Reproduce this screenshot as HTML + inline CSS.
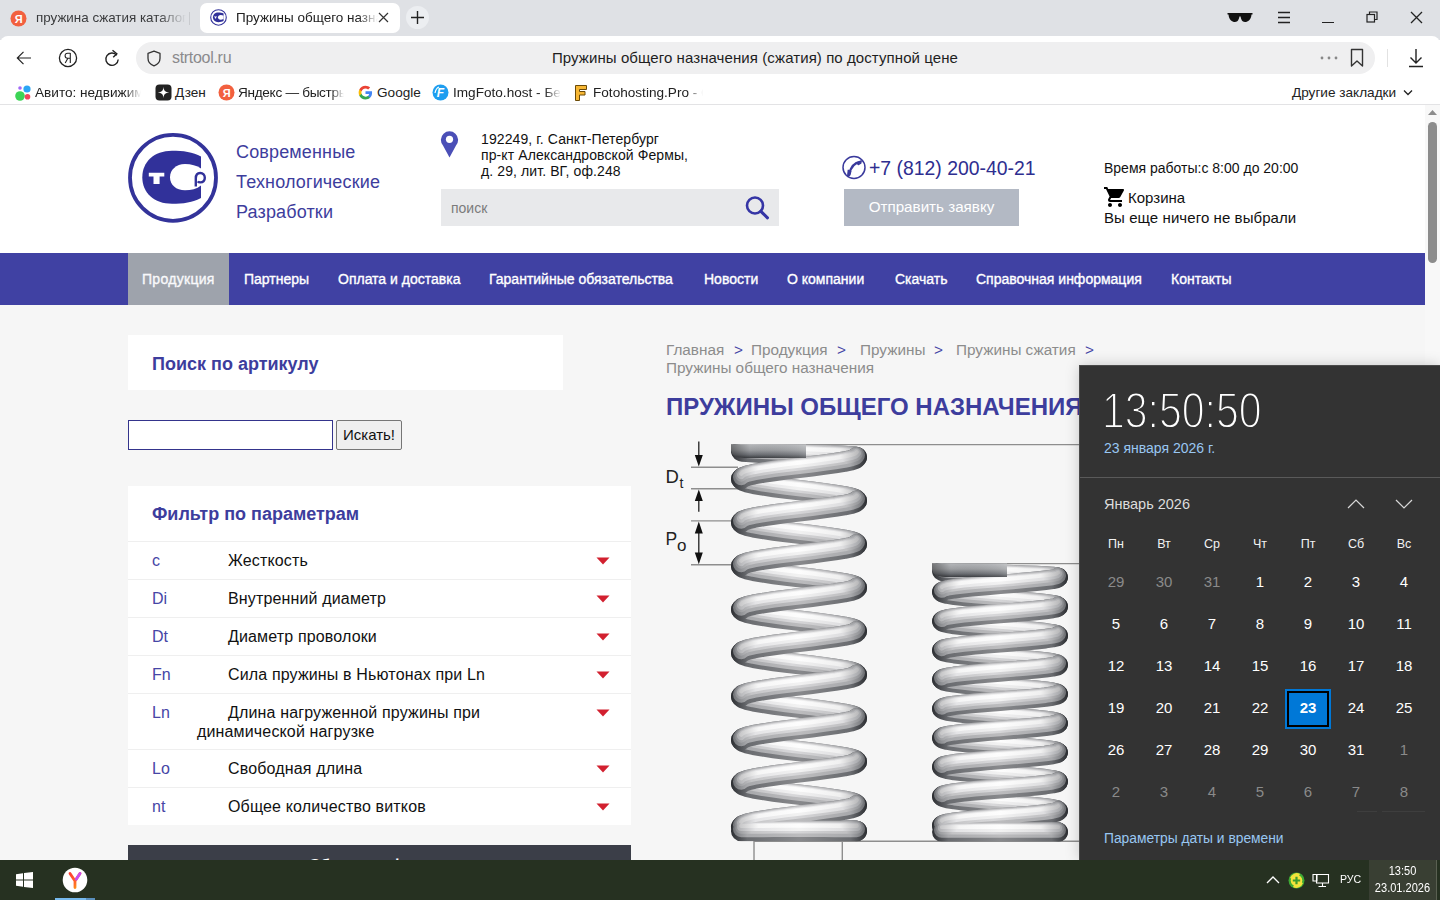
<!DOCTYPE html>
<html><head><meta charset="utf-8">
<style>
*{margin:0;padding:0;box-sizing:border-box}
html,body{width:1440px;height:900px;overflow:hidden;font-family:"Liberation Sans",sans-serif;background:#fff}
.abs{position:absolute}
.nw{white-space:nowrap}
#tabbar{position:absolute;left:0;top:0;width:1440px;height:40px;background:#dfe1e5}
#chrome{position:absolute;left:0;top:36px;width:1440px;height:69px;background:#fff;border-radius:8px 8px 0 0}
#page{position:absolute;left:0;top:105px;width:1425px;height:755px;background:#f6f6f6;overflow:hidden}
#scroll{position:absolute;left:1425px;top:105px;width:15px;height:755px;background:#f8f8f8}
#taskbar{position:absolute;left:0;top:860px;width:1440px;height:40px;background:#263121}
#cal{position:absolute;left:1080px;top:366px;width:360px;height:494px;background:#333;box-shadow:0 0 14px rgba(0,0,0,0.22);outline:1px solid #4a4a4a}
.filt{position:absolute;left:128px;width:503px;height:38px;font-size:16px;line-height:19px}
.filt i{position:absolute;left:24px;top:0;font-style:normal;color:#4646a6}
.filt b{position:absolute;left:100px;top:0;font-weight:normal;color:#111;letter-spacing:0.15px}
.gt{color:#4646a6}
.calrow{position:absolute;left:0;width:360px;height:20px;font-size:15px;line-height:20px;color:#fff}
.calrow span{position:absolute;width:48px;text-align:center}
.calrow span:nth-child(1){left:12px}.calrow span:nth-child(2){left:60px}.calrow span:nth-child(3){left:108px}.calrow span:nth-child(4){left:156px}.calrow span:nth-child(5){left:204px}.calrow span:nth-child(6){left:252px}.calrow span:nth-child(7){left:300px}
.calrow span.g{color:#8a8a8a}
</style></head>
<body>
<!-- TAB BAR -->
<div id="tabbar">
  <svg class="abs" style="left:10px;top:10px" width="17" height="17" viewBox="0 0 17 17"><circle cx="8.5" cy="8.5" r="8" fill="#f2603f"/><text x="8.6" y="13" font-size="11" font-weight="bold" fill="#fff" text-anchor="middle" font-family="Liberation Sans">Я</text></svg>
  <div class="abs nw" style="left:36px;top:10px;font-size:13.4px;color:#3a3b3d;width:150px;overflow:hidden;-webkit-mask-image:linear-gradient(90deg,#000 82%,transparent 100%)">пружина сжатия каталог сталь</div>
  <div class="abs" style="left:189px;top:12px;width:1px;height:13px;background:#c9cbcf"></div>
  <div class="abs" style="left:200px;top:3px;width:200px;height:30px;background:#fff;border-radius:7px"></div>
  <svg class="abs" style="left:210px;top:9px" width="17" height="17" viewBox="126 131 94 94"><circle cx="173" cy="177.8" r="43" fill="none" stroke="#33339a" stroke-width="6"/><path d="M201 156.5 C193 152 183 150.8 172 150.8 C154 150.8 142.3 162 142.3 177.3 C142.3 192.8 154 203.8 172 203.8 C183 203.8 193 202.5 201 198 Z" fill="#31319a"/><path d="M201 168.5 C197 165.5 191 164 185 164 C176 164 170 170 170 177.2 C170 184.6 176 190.3 185 190.3 C191 190.3 197 188.8 201 185.5 Z" fill="#fff"/><path d="M148.8 172.8H164.3V176.5H159.6V183.9H153.5V176.5H148.8Z" fill="#fff"/></svg>
  <div class="abs nw" style="left:236px;top:10px;font-size:13.5px;color:#222;width:142px;overflow:hidden;-webkit-mask-image:linear-gradient(90deg,#000 86%,transparent 100%)">Пружины общего назначения</div>
  <svg class="abs" style="left:378px;top:12px" width="11" height="11" viewBox="0 0 11 11"><path d="M1 1L10 10M10 1L1 10" stroke="#333" stroke-width="1.2"/></svg>
  <div class="abs" style="left:406px;top:6px;width:23px;height:23px;border-radius:50%;background:#eceef1"></div>
  <svg class="abs" style="left:410px;top:10px" width="15" height="15" viewBox="0 0 15 15"><path d="M7.5 1V14M1 7.5H14" stroke="#222" stroke-width="1.4"/></svg>
  <!-- right icons -->
  <svg class="abs" style="left:1227px;top:11px" width="26" height="12" viewBox="0 0 26 12"><path d="M0.5 2 H25.5 V3.5 H24.5 C24 9 21 11 18 11 C15 11 14 8 13.6 5.5 H12.4 C12 8 11 11 8 11 C5 11 2 9 1.5 3.5 H0.5Z" fill="#111"/></svg>
  <svg class="abs" style="left:1277px;top:11px" width="14" height="13" viewBox="0 0 14 13"><path d="M1 1.5H13M1 6.5H13M1 11.5H13" stroke="#222" stroke-width="1.3"/></svg>
  <div class="abs" style="left:1322px;top:22px;width:12px;height:1.3px;background:#222"></div>
  <svg class="abs" style="left:1366px;top:11px" width="13" height="13" viewBox="0 0 13 13"><rect x="1" y="3.5" width="7.5" height="7.5" fill="none" stroke="#222" stroke-width="1.2"/><path d="M3.5 3.5V1H11V8.5H8.5" fill="none" stroke="#222" stroke-width="1.2"/></svg>
  <svg class="abs" style="left:1410px;top:11px" width="13" height="13" viewBox="0 0 13 13"><path d="M1 1L12 12M12 1L1 12" stroke="#222" stroke-width="1.3"/></svg>
</div>
<!-- ADDRESS ROW + BOOKMARKS -->
<div id="chrome">
  <svg class="abs" style="left:15px;top:13px" width="18" height="18" viewBox="0 0 18 18"><path d="M2.5 9H16M8.5 2.8L2.3 9L8.5 15.2" fill="none" stroke="#222" stroke-width="1.15"/></svg>
  <svg class="abs" style="left:58px;top:12px" width="20" height="20" viewBox="0 0 20 20"><circle cx="10" cy="10" r="8.6" fill="none" stroke="#222" stroke-width="1.3"/><path d="M12.3 5V15M12.3 5.2H9.6C8 5.2 7.1 6.3 7.1 7.7C7.1 9.1 8 10.2 9.6 10.2H12.3M9.9 10.2L7.2 15" fill="none" stroke="#222" stroke-width="1.1"/></svg>
  <svg class="abs" style="left:103px;top:12px" width="18" height="20" viewBox="0 0 18 20"><path d="M13.8 7.2 A6.2 6.2 0 1 0 15.2 11.5" fill="none" stroke="#222" stroke-width="1.4"/><path d="M9.5 2.2L13.8 5.8L10.2 9.2" fill="none" stroke="#222" stroke-width="1.4"/></svg>
  <div class="abs" style="left:136px;top:6px;width:1239px;height:32px;border-radius:16px;background:#efeff0"></div>
  <svg class="abs" style="left:146px;top:14px" width="16" height="17" viewBox="0 0 16 17"><path d="M8 1.2L2 3.4V8.2C2 11.8 4.6 14.6 8 15.8C11.4 14.6 14 11.8 14 8.2V3.4Z" fill="none" stroke="#333" stroke-width="1.3" stroke-linejoin="round"/></svg>
  <div class="abs nw" style="left:172px;top:13px;font-size:16px;color:#8a8a8c;letter-spacing:-0.3px">strtool.ru</div>
  <div class="abs nw" style="left:552px;top:13px;font-size:15px;color:#1e1e1e;letter-spacing:0.08px">Пружины общего назначения (сжатия) по доступной цене</div>
  <svg class="abs" style="left:1320px;top:20px" width="18" height="4" viewBox="0 0 18 4"><circle cx="2" cy="2" r="1.4" fill="#888"/><circle cx="9" cy="2" r="1.4" fill="#888"/><circle cx="16" cy="2" r="1.4" fill="#888"/></svg>
  <svg class="abs" style="left:1350px;top:12px" width="14" height="20" viewBox="0 0 14 20"><path d="M1.5 1.5H12.5V18L7 13L1.5 18Z" fill="none" stroke="#333" stroke-width="1.4" stroke-linejoin="round"/></svg>
  <div class="abs" style="left:1387px;top:13px;width:1px;height:18px;background:#e2e2e2"></div>
  <svg class="abs" style="left:1407px;top:12px" width="18" height="20" viewBox="0 0 18 20"><path d="M9 1V15M3.5 9.5L9 15L14.5 9.5M2 18.5H16" fill="none" stroke="#222" stroke-width="1.4"/></svg>
  <!-- bookmarks -->
  <svg class="abs" style="left:14px;top:48px" width="18" height="18" viewBox="0 0 18 18"><circle cx="6" cy="12" r="4.8" fill="#3cd455"/><circle cx="13" cy="5" r="3.6" fill="#2ba6f5"/><circle cx="13.5" cy="12.7" r="2.8" fill="#f0455b"/><circle cx="6" cy="4" r="1.8" fill="#a169f7"/></svg>
  <div class="abs nw" style="left:35px;top:49px;font-size:13.6px;color:#222;width:106px;overflow:hidden;-webkit-mask-image:linear-gradient(90deg,#000 85%,transparent 100%)">Авито: недвижимость</div>
  <svg class="abs" style="left:155px;top:48px" width="17" height="17" viewBox="0 0 17 17"><rect x="0.5" y="0.5" width="16" height="16" rx="4" fill="#222"/><path d="M8.5 2.8 C8.8 6.8 10.2 8.2 14.2 8.5 C10.2 8.8 8.8 10.2 8.5 14.2 C8.2 10.2 6.8 8.8 2.8 8.5 C6.8 8.2 8.2 6.8 8.5 2.8Z" fill="#fff"/></svg>
  <div class="abs nw" style="left:175px;top:49px;font-size:13.6px;color:#222">Дзен</div>
  <svg class="abs" style="left:218px;top:48px" width="17" height="17" viewBox="0 0 17 17"><circle cx="8.5" cy="8.5" r="8" fill="#f2603f"/><text x="8.6" y="13" font-size="11" font-weight="bold" fill="#fff" text-anchor="middle" font-family="Liberation Sans">Я</text></svg>
  <div class="abs nw" style="left:238px;top:49px;font-size:13.6px;color:#222;width:106px;overflow:hidden;-webkit-mask-image:linear-gradient(90deg,#000 88%,transparent 100%);letter-spacing:-0.3px">Яндекс — быстрый поиск</div>
  <svg class="abs" style="left:358px;top:49px" width="15" height="15" viewBox="0 0 24 24"><path d="M22.5 12.3c0-.8-.1-1.5-.2-2.3H12v4.3h5.9c-.3 1.4-1 2.5-2.2 3.3v2.8h3.6c2-1.9 3.2-4.7 3.2-8.1z" fill="#4285F4"/><path d="M12 23c3 0 5.5-1 7.3-2.7l-3.6-2.8c-1 .7-2.2 1.1-3.7 1.1-2.9 0-5.3-1.9-6.2-4.5H2.1v2.9C3.9 20.6 7.7 23 12 23z" fill="#34A853"/><path d="M5.8 14.1c-.2-.7-.4-1.4-.4-2.1s.1-1.4.4-2.1V7H2.1C1.4 8.5 1 10.2 1 12s.4 3.5 1.1 5l3.7-2.9z" fill="#FBBC05"/><path d="M12 5.4c1.6 0 3.1.6 4.2 1.7l3.2-3.2C17.5 2.1 15 1 12 1 7.7 1 3.9 3.4 2.1 7l3.7 2.9c.9-2.6 3.3-4.5 6.2-4.5z" fill="#EA4335"/></svg>
  <div class="abs nw" style="left:377px;top:49px;font-size:13.6px;color:#222">Google</div>
  <svg class="abs" style="left:432px;top:48px" width="17" height="17" viewBox="0 0 17 17"><circle cx="8.5" cy="8.5" r="8" fill="#1e9ef0"/><text x="8.5" y="13.2" font-size="12" font-weight="bold" font-style="italic" fill="#fff" text-anchor="middle" font-family="Liberation Sans">F</text><path d="M3 9 Q4 4 7 3" stroke="#fff" stroke-width="1.2" fill="none"/></svg>
  <div class="abs nw" style="left:453px;top:49px;font-size:13.6px;color:#222;width:108px;overflow:hidden;-webkit-mask-image:linear-gradient(90deg,#000 85%,transparent 100%)">ImgFoto.host - Бесплатный</div>
  <svg class="abs" style="left:574px;top:48px" width="14" height="18" viewBox="0 0 14 18"><path d="M1.5 1.5H12.5V5.5H5.5V7.5H11V11H5.5V16.5H1.5Z" fill="#f7b733" stroke="#6b4a08" stroke-width="1" stroke-linejoin="round"/></svg>
  <div class="abs nw" style="left:593px;top:49px;font-size:13.6px;color:#222;width:110px;overflow:hidden;-webkit-mask-image:linear-gradient(90deg,#000 86%,transparent 100%)">Fotohosting.Pro - Сервис</div>
  <div class="abs nw" style="left:1292px;top:49px;font-size:13.6px;color:#222">Другие закладки</div>
  <svg class="abs" style="left:1403px;top:53px" width="10" height="7" viewBox="0 0 10 7"><path d="M1 1.5L5 5.5L9 1.5" fill="none" stroke="#222" stroke-width="1.3"/></svg>
  <div class="abs" style="left:0;top:68px;width:1440px;height:1px;background:#e3e3e5"></div>
</div>

<div id="page">
<!-- HEADER (page coords: y offset 105) -->
<div class="abs" style="left:0;top:0;width:1425px;height:148px;background:#fff"></div>
<svg class="abs" style="left:126px;top:26px" width="94" height="94" viewBox="126 131 94 94">
  <circle cx="173" cy="177.8" r="43" fill="none" stroke="#33339a" stroke-width="3.8"/>
  <path d="M201 156.5 C193 152 183 150.8 172 150.8 C154 150.8 142.3 162 142.3 177.3 C142.3 192.8 154 203.8 172 203.8 C183 203.8 193 202.5 201 198 Z" fill="#31319a"/>
  <path d="M201 168.5 C197 165.5 191 164 185 164 C176 164 170 170 170 177.2 C170 184.6 176 190.3 185 190.3 C191 190.3 197 188.8 201 185.5 Z" fill="#fff"/>
  <path d="M148.8 172.8H164.3V176.5H159.6V183.9H153.5V176.5H148.8Z" fill="#fff"/>
  <path d="M195.8 186.5 V178.5 C195.8 174.8 197.5 173 200.2 173 C203 173 204.8 175 204.8 177.8 C204.8 180.6 203 182.4 200.2 182.4 C199 182.4 198.2 182 197.8 181.4" fill="none" stroke="#31319a" stroke-width="2.4"/>
</svg>
<div class="abs nw" style="left:236px;top:32px;font-size:18px;line-height:30px;color:#3d3d9d;letter-spacing:0.15px">Современные<br>Технологические<br>Разработки</div>
<svg class="abs" style="left:440px;top:25px" width="19" height="28" viewBox="0 0 19 28"><path d="M9.5 27.5 L3 15.5 A8.6 8.6 0 1 1 16 15.5 Z" fill="#4b4fb7"/><circle cx="9.5" cy="9.3" r="3.6" fill="#fff"/></svg>
<div class="abs nw" style="left:481px;top:26px;font-size:14px;line-height:16px;color:#111;letter-spacing:0.1px">192249, г. Санкт-Петербург<br>пр-кт Александровской Фермы,<br>д. 29, лит. ВГ, оф.248</div>
<div class="abs" style="left:441px;top:84px;width:338px;height:37px;background:#e8e9eb"></div>
<div class="abs nw" style="left:451px;top:95px;font-size:14px;color:#7b7b7b">поиск</div>
<svg class="abs" style="left:744px;top:91px" width="26" height="25" viewBox="744 196 26 25"><circle cx="755" cy="205.5" r="8" fill="none" stroke="#3535a5" stroke-width="2.6"/><path d="M760.8 211.3 L767.5 217.8" stroke="#3535a5" stroke-width="3" stroke-linecap="round"/></svg>
<svg class="abs" style="left:841px;top:50px" width="26" height="25" viewBox="841 155 26 25"><circle cx="854" cy="167.5" r="11" fill="none" stroke="#3a3a9c" stroke-width="1.5"/><path d="M860.5 161.8 C855 162.5 850.5 167 849.2 174.5" fill="none" stroke="#3a3a9c" stroke-width="2.2"/><path d="M856.5 162.8 L861.3 160.8 L860.8 163.3 L858.3 164.6Z" fill="#3a3a9c" stroke="#3a3a9c" stroke-width="1.2" stroke-linejoin="round"/><path d="M848.2 170.2 L850.8 171.5 L849.8 175.2 L847.6 176.4Z" fill="#3a3a9c" stroke="#3a3a9c" stroke-width="1.2" stroke-linejoin="round"/></svg>
<div class="abs nw" style="left:869px;top:52px;font-size:19.4px;color:#2e2e90">+7 (812) 200-40-21</div>
<div class="abs" style="left:844px;top:84px;width:175px;height:37px;background:#b3b9c4"></div>
<div class="abs nw" style="left:844px;top:93px;width:175px;text-align:center;font-size:15.2px;color:#fff">Отправить заявку</div>
<div class="abs nw" style="left:1104px;top:55px;font-size:14px;color:#111">Время работы:с 8:00 до 20:00</div>
<svg class="abs" style="left:1103px;top:79.5px" width="24" height="24" viewBox="0 0 24 24"><path d="M7 18c-1.1 0-1.99.9-1.99 2S5.9 22 7 22s2-.9 2-2-.9-2-2-2zM1 2v2h2l3.6 7.59-1.35 2.45c-.16.28-.25.61-.25.96 0 1.1.9 2 2 2h12v-2H7.42c-.14 0-.25-.11-.25-.25l.03-.12.9-1.630h7.45c.75 0 1.410-.41 1.75-1.03l3.58-6.49c.08-.14.12-.31.12-.48 0-.55-.45-1-1-1H5.21l-.94-2H1zm16 16c-1.1 0-1.99.9-1.99 2s.89 2 1.99 2 2-.9 2-2-.9-2-2-2z" fill="#000"/></svg>
<div class="abs nw" style="left:1128px;top:84px;font-size:15px;color:#111">Корзина</div>
<div class="abs nw" style="left:1104px;top:104px;font-size:15px;color:#111;letter-spacing:0.08px">Вы еще ничего не выбрали</div>
<!-- NAV -->
<div class="abs" style="left:0;top:148px;width:1425px;height:52px;background:#4041a3"></div>
<div class="abs" style="left:128px;top:148px;width:101px;height:52px;background:#9ea3ac"></div>
<div class="abs nw" style="left:0;top:166px;font-size:14px;color:#fff;-webkit-text-stroke:0.35px #fff">
  <span class="abs" style="left:142px;color:#f4f4f8;letter-spacing:0.3px">Продукция</span>
  <span class="abs" style="left:244px">Партнеры</span>
  <span class="abs" style="left:338px">Оплата и доставка</span>
  <span class="abs" style="left:489px">Гарантийные обязательства</span>
  <span class="abs" style="left:704px">Новости</span>
  <span class="abs" style="left:787px">О компании</span>
  <span class="abs" style="left:895px">Скачать</span>
  <span class="abs" style="left:976px">Справочная информация</span>
  <span class="abs" style="left:1171px">Контакты</span>
</div>

<!-- SIDEBAR (page coords, y offset 105) -->
<div class="abs" style="left:128px;top:230px;width:435px;height:55px;background:#fff"></div>
<div class="abs nw" style="left:152px;top:249px;font-size:18px;font-weight:bold;color:#3d3d9d">Поиск по артикулу</div>
<div class="abs" style="left:128px;top:315px;width:205px;height:30px;background:#fff;border:1px solid #34348c"></div>
<div class="abs nw" style="left:336px;top:315px;width:66px;height:30px;background:#efefef;border:1px solid #767676;border-radius:2px;font-size:15px;line-height:28px;text-align:center;color:#111">Искать!</div>
<div class="abs" style="left:128px;top:381px;width:503px;height:339px;background:#fff"></div>
<div class="abs nw" style="left:152px;top:399px;font-size:18px;font-weight:bold;color:#3d3d9d">Фильтр по параметрам</div>
<div class="abs" style="left:128px;top:436px;width:503px;height:1px;background:#efefef"></div>
<div class="abs" style="left:128px;top:474px;width:503px;height:1px;background:#efefef"></div>
<div class="abs" style="left:128px;top:512px;width:503px;height:1px;background:#efefef"></div>
<div class="abs" style="left:128px;top:550px;width:503px;height:1px;background:#efefef"></div>
<div class="abs" style="left:128px;top:588px;width:503px;height:1px;background:#efefef"></div>
<div class="abs" style="left:128px;top:644px;width:503px;height:1px;background:#efefef"></div>
<div class="abs" style="left:128px;top:682px;width:503px;height:1px;background:#efefef"></div>
<div class="filt nw" style="top:446px"><i>c</i><b>Жесткость</b></div>
<div class="filt nw" style="top:484px"><i>Di</i><b>Внутренний диаметр</b></div>
<div class="filt nw" style="top:522px"><i>Dt</i><b>Диаметр проволоки</b></div>
<div class="filt nw" style="top:560px"><i>Fn</i><b>Сила пружины в Ньютонах при Ln</b></div>
<div class="filt nw" style="top:598px"><i>Ln</i><b>Длина нагруженной пружины при</b><b style="left:69px;top:19px">динамической нагрузке</b></div>
<div class="filt nw" style="top:654px"><i>Lo</i><b>Свободная длина</b></div>
<div class="filt nw" style="top:692px"><i>nt</i><b>Общее количество витков</b></div>
<svg class="abs" style="left:596px;top:452px" width="14" height="8" viewBox="0 0 14 8"><path d="M0.5 0.5H13.5L7 7.5Z" fill="#d2202f"/></svg>
<svg class="abs" style="left:596px;top:490px" width="14" height="8" viewBox="0 0 14 8"><path d="M0.5 0.5H13.5L7 7.5Z" fill="#d2202f"/></svg>
<svg class="abs" style="left:596px;top:528px" width="14" height="8" viewBox="0 0 14 8"><path d="M0.5 0.5H13.5L7 7.5Z" fill="#d2202f"/></svg>
<svg class="abs" style="left:596px;top:566px" width="14" height="8" viewBox="0 0 14 8"><path d="M0.5 0.5H13.5L7 7.5Z" fill="#d2202f"/></svg>
<svg class="abs" style="left:596px;top:604px" width="14" height="8" viewBox="0 0 14 8"><path d="M0.5 0.5H13.5L7 7.5Z" fill="#d2202f"/></svg>
<svg class="abs" style="left:596px;top:660px" width="14" height="8" viewBox="0 0 14 8"><path d="M0.5 0.5H13.5L7 7.5Z" fill="#d2202f"/></svg>
<svg class="abs" style="left:596px;top:698px" width="14" height="8" viewBox="0 0 14 8"><path d="M0.5 0.5H13.5L7 7.5Z" fill="#d2202f"/></svg>
<div class="abs" style="left:128px;top:740px;width:503px;height:40px;background:#3b3e48"></div>
<div class="abs nw" style="left:128px;top:752px;width:503px;text-align:center;font-size:16px;font-weight:bold;color:#fff">Сбросить фильтр</div>
<!-- BREADCRUMB -->
<div class="abs nw" style="left:666px;top:236px;font-size:15.3px;line-height:18px;color:#8c8c8c">
  <span class="abs" style="left:0">Главная</span>
  <span class="abs gt" style="left:68px">&gt;</span>
  <span class="abs" style="left:85px">Продукция</span>
  <span class="abs gt" style="left:171px">&gt;</span>
  <span class="abs" style="left:194px">Пружины</span>
  <span class="abs gt" style="left:268px">&gt;</span>
  <span class="abs" style="left:290px">Пружины сжатия</span>
  <span class="abs gt" style="left:419px">&gt;</span>
  <span class="abs" style="left:0;top:18px">Пружины общего назначения</span>
</div>
<div class="abs nw" style="left:666px;top:288px;font-size:24px;font-weight:bold;color:#3d3d9d">ПРУЖИНЫ ОБЩЕГО НАЗНАЧЕНИЯ</div>
<!-- SPRING --><svg class="abs" style="left:650px;top:325px" width="440" height="440" viewBox="650 430 440 440"><defs><linearGradient id="tg" x1="0" y1="0" x2="0" y2="1"><stop offset="0" stop-color="#b4b6b9"/><stop offset="0.4" stop-color="#9c9ea1"/><stop offset="0.75" stop-color="#6c6f74"/><stop offset="1" stop-color="#3a3c40"/></linearGradient><linearGradient id="th" x1="0" y1="0" x2="1" y2="0"><stop offset="0" stop-color="#000" stop-opacity="0.35"/><stop offset="0.25" stop-color="#000" stop-opacity="0"/><stop offset="0.9" stop-color="#fff" stop-opacity="0.1"/><stop offset="1" stop-color="#fff" stop-opacity="0.2"/></linearGradient><clipPath id="c1"><rect x="720" y="444.6" width="160" height="397"/></clipPath><clipPath id="c2"><rect x="920" y="563.6" width="160" height="278"/></clipPath></defs><path d="M731 444.6H1100M932 563.6H1100M754 841.3H1100M754 841V870M842.3 841V870" stroke="#8e8e8e" stroke-width="1.4" fill="none"/>
<path d="M691 467.2H738M691 488.8H738M691 520.9H731M691 564.8H731" stroke="#8e8e8e" stroke-width="1.4" fill="none"/>
<path d="M698.8 441.5V456M698.8 500V511.7M698.8 533V553" stroke="#222" stroke-width="1.3" fill="none"/>
<path d="M694.8 455H702.8L698.8 466.5Z M694.8 501H702.8L698.8 489.5Z M694.8 533.5H702.8L698.8 521.5Z M694.8 552.5H702.8L698.8 564.3Z" fill="#111"/>
<text x="665.5" y="482.6" font-family="Liberation Sans" font-size="18.5" fill="#222">D</text>
<text x="679.5" y="488" font-family="Liberation Sans" font-size="14" fill="#222">t</text>
<text x="665.5" y="545.2" font-family="Liberation Sans" font-size="17.5" fill="#222">P</text>
<text x="677" y="551" font-family="Liberation Sans" font-size="17" fill="#222">o</text><g clip-path="url(#c1)"><linearGradient id="ga0" gradientUnits="userSpaceOnUse" x1="731" y1="0" x2="867" y2="0"><stop offset="0" stop-color="#2c2e32"/><stop offset="0.12" stop-color="#6a6c70"/><stop offset="0.5" stop-color="#88898c"/><stop offset="0.88" stop-color="#6a6c70"/><stop offset="1" stop-color="#2c2e32"/></linearGradient><linearGradient id="ga1" gradientUnits="userSpaceOnUse" x1="731" y1="0" x2="867" y2="0"><stop offset="0" stop-color="#6c6e72"/><stop offset="0.12" stop-color="#a8a9ac"/><stop offset="0.5" stop-color="#bcbcbe"/><stop offset="0.88" stop-color="#a8a9ac"/><stop offset="1" stop-color="#66686c"/></linearGradient><linearGradient id="ga2" gradientUnits="userSpaceOnUse" x1="731" y1="0" x2="867" y2="0"><stop offset="0" stop-color="#808286"/><stop offset="0.15" stop-color="#c4c4c6"/><stop offset="0.45" stop-color="#d8d8da"/><stop offset="0.85" stop-color="#c0c0c2"/><stop offset="1" stop-color="#7a7c80"/></linearGradient><linearGradient id="ga3" gradientUnits="userSpaceOnUse" x1="731" y1="0" x2="867" y2="0"><stop offset="0" stop-color="#9a9b9e"/><stop offset="0.18" stop-color="#e4e4e6"/><stop offset="0.5" stop-color="#f2f2f2"/><stop offset="0.82" stop-color="#dedee0"/><stop offset="1" stop-color="#8e9094"/></linearGradient><linearGradient id="ga4" gradientUnits="userSpaceOnUse" x1="731" y1="0" x2="867" y2="0"><stop offset="0" stop-color="#b0b0b2"/><stop offset="0.2" stop-color="#f6f6f6"/><stop offset="0.5" stop-color="#fdfdfd"/><stop offset="0.8" stop-color="#f0f0f0"/><stop offset="1" stop-color="#a0a0a2"/></linearGradient><path d="M741.2 451.0 L742.7 451.5 L747.0 451.9 L753.8 452.4 L763.0 452.9 L773.9 453.3 L786.1 453.8 L799.0 454.2 L811.9 454.7 L824.1 455.1 L835.0 455.5 L844.2 456.0 L851.0 456.4 L855.3 456.8 L856.8 457.2 M741.2 479.0 L742.7 480.6 L747.0 482.2 L753.8 483.8 L763.0 485.4 L773.9 487.0 L786.1 488.6 L799.0 490.2 L811.9 491.7 L824.1 493.3 L835.0 494.8 L844.2 496.3 L851.0 497.8 L855.3 499.3 L856.8 500.8 M741.2 522.5 L742.7 524.1 L747.0 525.7 L753.8 527.3 L763.0 528.9 L773.9 530.5 L786.1 532.1 L799.0 533.7 L811.9 535.2 L824.1 536.8 L835.0 538.3 L844.2 539.8 L851.0 541.3 L855.3 542.8 L856.8 544.2 M741.2 566.0 L742.7 567.6 L747.0 569.2 L753.8 570.8 L763.0 572.4 L773.9 574.0 L786.1 575.6 L799.0 577.2 L811.9 578.7 L824.1 580.3 L835.0 581.8 L844.2 583.3 L851.0 584.8 L855.3 586.3 L856.8 587.8 M741.2 609.5 L742.7 611.1 L747.0 612.7 L753.8 614.3 L763.0 615.9 L773.9 617.5 L786.1 619.1 L799.0 620.7 L811.9 622.2 L824.1 623.8 L835.0 625.3 L844.2 626.8 L851.0 628.3 L855.3 629.8 L856.8 631.2 M741.2 653.0 L742.7 654.6 L747.0 656.2 L753.8 657.8 L763.0 659.4 L773.9 661.0 L786.1 662.6 L799.0 664.2 L811.9 665.7 L824.1 667.3 L835.0 668.8 L844.2 670.3 L851.0 671.8 L855.3 673.3 L856.8 674.8 M741.2 696.5 L742.7 698.1 L747.0 699.7 L753.8 701.3 L763.0 702.9 L773.9 704.5 L786.1 706.1 L799.0 707.7 L811.9 709.2 L824.1 710.8 L835.0 712.3 L844.2 713.8 L851.0 715.3 L855.3 716.8 L856.8 718.2 M741.2 740.0 L742.7 741.6 L747.0 743.2 L753.8 744.8 L763.0 746.4 L773.9 748.0 L786.1 749.6 L799.0 751.2 L811.9 752.7 L824.1 754.3 L835.0 755.8 L844.2 757.3 L851.0 758.8 L855.3 760.3 L856.8 761.8 M741.2 783.5 L742.7 785.1 L747.0 786.7 L753.8 788.3 L763.0 789.9 L773.9 791.5 L786.1 793.1 L799.0 794.7 L811.9 796.2 L824.1 797.8 L835.0 799.3 L844.2 800.8 L851.0 802.3 L855.3 803.8 L856.8 805.2 M741.2 827.0 L742.7 827.3 L747.0 827.6 L753.8 828.0 L763.0 828.3 L773.9 828.6 L786.1 828.9 L799.0 829.1 L811.9 829.4 L824.1 829.7 L835.0 830.0 L844.2 830.2 L851.0 830.5 L855.3 830.7 L856.8 831.0" transform="translate(0 0)" fill="none" stroke="url(#ga0)" stroke-width="20.5" stroke-linejoin="round" stroke-linecap="round"/><path d="M741.2 451.0 L742.7 451.5 L747.0 451.9 L753.8 452.4 L763.0 452.9 L773.9 453.3 L786.1 453.8 L799.0 454.2 L811.9 454.7 L824.1 455.1 L835.0 455.5 L844.2 456.0 L851.0 456.4 L855.3 456.8 L856.8 457.2 M741.2 479.0 L742.7 480.6 L747.0 482.2 L753.8 483.8 L763.0 485.4 L773.9 487.0 L786.1 488.6 L799.0 490.2 L811.9 491.7 L824.1 493.3 L835.0 494.8 L844.2 496.3 L851.0 497.8 L855.3 499.3 L856.8 500.8 M741.2 522.5 L742.7 524.1 L747.0 525.7 L753.8 527.3 L763.0 528.9 L773.9 530.5 L786.1 532.1 L799.0 533.7 L811.9 535.2 L824.1 536.8 L835.0 538.3 L844.2 539.8 L851.0 541.3 L855.3 542.8 L856.8 544.2 M741.2 566.0 L742.7 567.6 L747.0 569.2 L753.8 570.8 L763.0 572.4 L773.9 574.0 L786.1 575.6 L799.0 577.2 L811.9 578.7 L824.1 580.3 L835.0 581.8 L844.2 583.3 L851.0 584.8 L855.3 586.3 L856.8 587.8 M741.2 609.5 L742.7 611.1 L747.0 612.7 L753.8 614.3 L763.0 615.9 L773.9 617.5 L786.1 619.1 L799.0 620.7 L811.9 622.2 L824.1 623.8 L835.0 625.3 L844.2 626.8 L851.0 628.3 L855.3 629.8 L856.8 631.2 M741.2 653.0 L742.7 654.6 L747.0 656.2 L753.8 657.8 L763.0 659.4 L773.9 661.0 L786.1 662.6 L799.0 664.2 L811.9 665.7 L824.1 667.3 L835.0 668.8 L844.2 670.3 L851.0 671.8 L855.3 673.3 L856.8 674.8 M741.2 696.5 L742.7 698.1 L747.0 699.7 L753.8 701.3 L763.0 702.9 L773.9 704.5 L786.1 706.1 L799.0 707.7 L811.9 709.2 L824.1 710.8 L835.0 712.3 L844.2 713.8 L851.0 715.3 L855.3 716.8 L856.8 718.2 M741.2 740.0 L742.7 741.6 L747.0 743.2 L753.8 744.8 L763.0 746.4 L773.9 748.0 L786.1 749.6 L799.0 751.2 L811.9 752.7 L824.1 754.3 L835.0 755.8 L844.2 757.3 L851.0 758.8 L855.3 760.3 L856.8 761.8 M741.2 783.5 L742.7 785.1 L747.0 786.7 L753.8 788.3 L763.0 789.9 L773.9 791.5 L786.1 793.1 L799.0 794.7 L811.9 796.2 L824.1 797.8 L835.0 799.3 L844.2 800.8 L851.0 802.3 L855.3 803.8 L856.8 805.2 M741.2 827.0 L742.7 827.3 L747.0 827.6 L753.8 828.0 L763.0 828.3 L773.9 828.6 L786.1 828.9 L799.0 829.1 L811.9 829.4 L824.1 829.7 L835.0 830.0 L844.2 830.2 L851.0 830.5 L855.3 830.7 L856.8 831.0" transform="translate(0 -2.0500000000000003)" fill="none" stroke="url(#ga1)" stroke-width="16.4" stroke-linejoin="round" stroke-linecap="round"/><path d="M741.2 451.0 L742.7 451.5 L747.0 451.9 L753.8 452.4 L763.0 452.9 L773.9 453.3 L786.1 453.8 L799.0 454.2 L811.9 454.7 L824.1 455.1 L835.0 455.5 L844.2 456.0 L851.0 456.4 L855.3 456.8 L856.8 457.2 M741.2 479.0 L742.7 480.6 L747.0 482.2 L753.8 483.8 L763.0 485.4 L773.9 487.0 L786.1 488.6 L799.0 490.2 L811.9 491.7 L824.1 493.3 L835.0 494.8 L844.2 496.3 L851.0 497.8 L855.3 499.3 L856.8 500.8 M741.2 522.5 L742.7 524.1 L747.0 525.7 L753.8 527.3 L763.0 528.9 L773.9 530.5 L786.1 532.1 L799.0 533.7 L811.9 535.2 L824.1 536.8 L835.0 538.3 L844.2 539.8 L851.0 541.3 L855.3 542.8 L856.8 544.2 M741.2 566.0 L742.7 567.6 L747.0 569.2 L753.8 570.8 L763.0 572.4 L773.9 574.0 L786.1 575.6 L799.0 577.2 L811.9 578.7 L824.1 580.3 L835.0 581.8 L844.2 583.3 L851.0 584.8 L855.3 586.3 L856.8 587.8 M741.2 609.5 L742.7 611.1 L747.0 612.7 L753.8 614.3 L763.0 615.9 L773.9 617.5 L786.1 619.1 L799.0 620.7 L811.9 622.2 L824.1 623.8 L835.0 625.3 L844.2 626.8 L851.0 628.3 L855.3 629.8 L856.8 631.2 M741.2 653.0 L742.7 654.6 L747.0 656.2 L753.8 657.8 L763.0 659.4 L773.9 661.0 L786.1 662.6 L799.0 664.2 L811.9 665.7 L824.1 667.3 L835.0 668.8 L844.2 670.3 L851.0 671.8 L855.3 673.3 L856.8 674.8 M741.2 696.5 L742.7 698.1 L747.0 699.7 L753.8 701.3 L763.0 702.9 L773.9 704.5 L786.1 706.1 L799.0 707.7 L811.9 709.2 L824.1 710.8 L835.0 712.3 L844.2 713.8 L851.0 715.3 L855.3 716.8 L856.8 718.2 M741.2 740.0 L742.7 741.6 L747.0 743.2 L753.8 744.8 L763.0 746.4 L773.9 748.0 L786.1 749.6 L799.0 751.2 L811.9 752.7 L824.1 754.3 L835.0 755.8 L844.2 757.3 L851.0 758.8 L855.3 760.3 L856.8 761.8 M741.2 783.5 L742.7 785.1 L747.0 786.7 L753.8 788.3 L763.0 789.9 L773.9 791.5 L786.1 793.1 L799.0 794.7 L811.9 796.2 L824.1 797.8 L835.0 799.3 L844.2 800.8 L851.0 802.3 L855.3 803.8 L856.8 805.2 M741.2 827.0 L742.7 827.3 L747.0 827.6 L753.8 828.0 L763.0 828.3 L773.9 828.6 L786.1 828.9 L799.0 829.1 L811.9 829.4 L824.1 829.7 L835.0 830.0 L844.2 830.2 L851.0 830.5 L855.3 830.7 L856.8 831.0" transform="translate(0 -3.2800000000000002)" fill="none" stroke="url(#ga2)" stroke-width="11.9" stroke-linejoin="round" stroke-linecap="round"/><path d="M741.2 451.0 L742.7 451.5 L747.0 451.9 L753.8 452.4 L763.0 452.9 L773.9 453.3 L786.1 453.8 L799.0 454.2 L811.9 454.7 L824.1 455.1 L835.0 455.5 L844.2 456.0 L851.0 456.4 L855.3 456.8 L856.8 457.2 M741.2 479.0 L742.7 480.6 L747.0 482.2 L753.8 483.8 L763.0 485.4 L773.9 487.0 L786.1 488.6 L799.0 490.2 L811.9 491.7 L824.1 493.3 L835.0 494.8 L844.2 496.3 L851.0 497.8 L855.3 499.3 L856.8 500.8 M741.2 522.5 L742.7 524.1 L747.0 525.7 L753.8 527.3 L763.0 528.9 L773.9 530.5 L786.1 532.1 L799.0 533.7 L811.9 535.2 L824.1 536.8 L835.0 538.3 L844.2 539.8 L851.0 541.3 L855.3 542.8 L856.8 544.2 M741.2 566.0 L742.7 567.6 L747.0 569.2 L753.8 570.8 L763.0 572.4 L773.9 574.0 L786.1 575.6 L799.0 577.2 L811.9 578.7 L824.1 580.3 L835.0 581.8 L844.2 583.3 L851.0 584.8 L855.3 586.3 L856.8 587.8 M741.2 609.5 L742.7 611.1 L747.0 612.7 L753.8 614.3 L763.0 615.9 L773.9 617.5 L786.1 619.1 L799.0 620.7 L811.9 622.2 L824.1 623.8 L835.0 625.3 L844.2 626.8 L851.0 628.3 L855.3 629.8 L856.8 631.2 M741.2 653.0 L742.7 654.6 L747.0 656.2 L753.8 657.8 L763.0 659.4 L773.9 661.0 L786.1 662.6 L799.0 664.2 L811.9 665.7 L824.1 667.3 L835.0 668.8 L844.2 670.3 L851.0 671.8 L855.3 673.3 L856.8 674.8 M741.2 696.5 L742.7 698.1 L747.0 699.7 L753.8 701.3 L763.0 702.9 L773.9 704.5 L786.1 706.1 L799.0 707.7 L811.9 709.2 L824.1 710.8 L835.0 712.3 L844.2 713.8 L851.0 715.3 L855.3 716.8 L856.8 718.2 M741.2 740.0 L742.7 741.6 L747.0 743.2 L753.8 744.8 L763.0 746.4 L773.9 748.0 L786.1 749.6 L799.0 751.2 L811.9 752.7 L824.1 754.3 L835.0 755.8 L844.2 757.3 L851.0 758.8 L855.3 760.3 L856.8 761.8 M741.2 783.5 L742.7 785.1 L747.0 786.7 L753.8 788.3 L763.0 789.9 L773.9 791.5 L786.1 793.1 L799.0 794.7 L811.9 796.2 L824.1 797.8 L835.0 799.3 L844.2 800.8 L851.0 802.3 L855.3 803.8 L856.8 805.2 M741.2 827.0 L742.7 827.3 L747.0 827.6 L753.8 828.0 L763.0 828.3 L773.9 828.6 L786.1 828.9 L799.0 829.1 L811.9 829.4 L824.1 829.7 L835.0 830.0 L844.2 830.2 L851.0 830.5 L855.3 830.7 L856.8 831.0" transform="translate(0 -4.1000000000000005)" fill="none" stroke="url(#ga3)" stroke-width="8.2" stroke-linejoin="round" stroke-linecap="round"/><path d="M741.2 451.0 L742.7 451.5 L747.0 451.9 L753.8 452.4 L763.0 452.9 L773.9 453.3 L786.1 453.8 L799.0 454.2 L811.9 454.7 L824.1 455.1 L835.0 455.5 L844.2 456.0 L851.0 456.4 L855.3 456.8 L856.8 457.2 M741.2 479.0 L742.7 480.6 L747.0 482.2 L753.8 483.8 L763.0 485.4 L773.9 487.0 L786.1 488.6 L799.0 490.2 L811.9 491.7 L824.1 493.3 L835.0 494.8 L844.2 496.3 L851.0 497.8 L855.3 499.3 L856.8 500.8 M741.2 522.5 L742.7 524.1 L747.0 525.7 L753.8 527.3 L763.0 528.9 L773.9 530.5 L786.1 532.1 L799.0 533.7 L811.9 535.2 L824.1 536.8 L835.0 538.3 L844.2 539.8 L851.0 541.3 L855.3 542.8 L856.8 544.2 M741.2 566.0 L742.7 567.6 L747.0 569.2 L753.8 570.8 L763.0 572.4 L773.9 574.0 L786.1 575.6 L799.0 577.2 L811.9 578.7 L824.1 580.3 L835.0 581.8 L844.2 583.3 L851.0 584.8 L855.3 586.3 L856.8 587.8 M741.2 609.5 L742.7 611.1 L747.0 612.7 L753.8 614.3 L763.0 615.9 L773.9 617.5 L786.1 619.1 L799.0 620.7 L811.9 622.2 L824.1 623.8 L835.0 625.3 L844.2 626.8 L851.0 628.3 L855.3 629.8 L856.8 631.2 M741.2 653.0 L742.7 654.6 L747.0 656.2 L753.8 657.8 L763.0 659.4 L773.9 661.0 L786.1 662.6 L799.0 664.2 L811.9 665.7 L824.1 667.3 L835.0 668.8 L844.2 670.3 L851.0 671.8 L855.3 673.3 L856.8 674.8 M741.2 696.5 L742.7 698.1 L747.0 699.7 L753.8 701.3 L763.0 702.9 L773.9 704.5 L786.1 706.1 L799.0 707.7 L811.9 709.2 L824.1 710.8 L835.0 712.3 L844.2 713.8 L851.0 715.3 L855.3 716.8 L856.8 718.2 M741.2 740.0 L742.7 741.6 L747.0 743.2 L753.8 744.8 L763.0 746.4 L773.9 748.0 L786.1 749.6 L799.0 751.2 L811.9 752.7 L824.1 754.3 L835.0 755.8 L844.2 757.3 L851.0 758.8 L855.3 760.3 L856.8 761.8 M741.2 783.5 L742.7 785.1 L747.0 786.7 L753.8 788.3 L763.0 789.9 L773.9 791.5 L786.1 793.1 L799.0 794.7 L811.9 796.2 L824.1 797.8 L835.0 799.3 L844.2 800.8 L851.0 802.3 L855.3 803.8 L856.8 805.2 M741.2 827.0 L742.7 827.3 L747.0 827.6 L753.8 828.0 L763.0 828.3 L773.9 828.6 L786.1 828.9 L799.0 829.1 L811.9 829.4 L824.1 829.7 L835.0 830.0 L844.2 830.2 L851.0 830.5 L855.3 830.7 L856.8 831.0" transform="translate(0 -5.125)" fill="none" stroke="url(#ga4)" stroke-width="4.1" stroke-linejoin="round" stroke-linecap="round"/><path d="M741.2 479.0 L742.7 477.4 L747.0 475.8 L753.8 474.2 L763.0 472.6 L773.9 471.0 L786.1 469.4 L799.0 467.8 L811.9 466.3 L824.1 464.7 L835.0 463.2 L844.2 461.7 L851.0 460.2 L855.3 458.7 L856.8 457.2 M741.2 522.5 L742.7 520.9 L747.0 519.3 L753.8 517.7 L763.0 516.1 L773.9 514.5 L786.1 512.9 L799.0 511.3 L811.9 509.8 L824.1 508.2 L835.0 506.7 L844.2 505.2 L851.0 503.7 L855.3 502.2 L856.8 500.8 M741.2 566.0 L742.7 564.4 L747.0 562.8 L753.8 561.2 L763.0 559.6 L773.9 558.0 L786.1 556.4 L799.0 554.8 L811.9 553.3 L824.1 551.7 L835.0 550.2 L844.2 548.7 L851.0 547.2 L855.3 545.7 L856.8 544.2 M741.2 609.5 L742.7 607.9 L747.0 606.3 L753.8 604.7 L763.0 603.1 L773.9 601.5 L786.1 599.9 L799.0 598.3 L811.9 596.8 L824.1 595.2 L835.0 593.7 L844.2 592.2 L851.0 590.7 L855.3 589.2 L856.8 587.8 M741.2 653.0 L742.7 651.4 L747.0 649.8 L753.8 648.2 L763.0 646.6 L773.9 645.0 L786.1 643.4 L799.0 641.8 L811.9 640.3 L824.1 638.7 L835.0 637.2 L844.2 635.7 L851.0 634.2 L855.3 632.7 L856.8 631.2 M741.2 696.5 L742.7 694.9 L747.0 693.3 L753.8 691.7 L763.0 690.1 L773.9 688.5 L786.1 686.9 L799.0 685.3 L811.9 683.8 L824.1 682.2 L835.0 680.7 L844.2 679.2 L851.0 677.7 L855.3 676.2 L856.8 674.8 M741.2 740.0 L742.7 738.4 L747.0 736.8 L753.8 735.2 L763.0 733.6 L773.9 732.0 L786.1 730.4 L799.0 728.8 L811.9 727.3 L824.1 725.7 L835.0 724.2 L844.2 722.7 L851.0 721.2 L855.3 719.7 L856.8 718.2 M741.2 783.5 L742.7 781.9 L747.0 780.3 L753.8 778.7 L763.0 777.1 L773.9 775.5 L786.1 773.9 L799.0 772.3 L811.9 770.8 L824.1 769.2 L835.0 767.7 L844.2 766.2 L851.0 764.7 L855.3 763.2 L856.8 761.8 M741.2 827.0 L742.7 825.4 L747.0 823.8 L753.8 822.2 L763.0 820.6 L773.9 819.0 L786.1 817.4 L799.0 815.8 L811.9 814.3 L824.1 812.7 L835.0 811.2 L844.2 809.7 L851.0 808.2 L855.3 806.7 L856.8 805.2 M741.2 831.0 L742.7 831.0 L747.0 831.0 L753.8 831.0 L763.0 831.0 L773.9 830.9 L786.1 830.9 L799.0 830.9 L811.9 830.9 L824.1 830.9 L835.0 831.0 L844.2 831.0 L851.0 831.0 L855.3 831.0 L856.8 831.0" transform="translate(0 0)" fill="none" stroke="url(#ga0)" stroke-width="20.5" stroke-linejoin="round" stroke-linecap="round"/><path d="M741.2 479.0 L742.7 477.4 L747.0 475.8 L753.8 474.2 L763.0 472.6 L773.9 471.0 L786.1 469.4 L799.0 467.8 L811.9 466.3 L824.1 464.7 L835.0 463.2 L844.2 461.7 L851.0 460.2 L855.3 458.7 L856.8 457.2 M741.2 522.5 L742.7 520.9 L747.0 519.3 L753.8 517.7 L763.0 516.1 L773.9 514.5 L786.1 512.9 L799.0 511.3 L811.9 509.8 L824.1 508.2 L835.0 506.7 L844.2 505.2 L851.0 503.7 L855.3 502.2 L856.8 500.8 M741.2 566.0 L742.7 564.4 L747.0 562.8 L753.8 561.2 L763.0 559.6 L773.9 558.0 L786.1 556.4 L799.0 554.8 L811.9 553.3 L824.1 551.7 L835.0 550.2 L844.2 548.7 L851.0 547.2 L855.3 545.7 L856.8 544.2 M741.2 609.5 L742.7 607.9 L747.0 606.3 L753.8 604.7 L763.0 603.1 L773.9 601.5 L786.1 599.9 L799.0 598.3 L811.9 596.8 L824.1 595.2 L835.0 593.7 L844.2 592.2 L851.0 590.7 L855.3 589.2 L856.8 587.8 M741.2 653.0 L742.7 651.4 L747.0 649.8 L753.8 648.2 L763.0 646.6 L773.9 645.0 L786.1 643.4 L799.0 641.8 L811.9 640.3 L824.1 638.7 L835.0 637.2 L844.2 635.7 L851.0 634.2 L855.3 632.7 L856.8 631.2 M741.2 696.5 L742.7 694.9 L747.0 693.3 L753.8 691.7 L763.0 690.1 L773.9 688.5 L786.1 686.9 L799.0 685.3 L811.9 683.8 L824.1 682.2 L835.0 680.7 L844.2 679.2 L851.0 677.7 L855.3 676.2 L856.8 674.8 M741.2 740.0 L742.7 738.4 L747.0 736.8 L753.8 735.2 L763.0 733.6 L773.9 732.0 L786.1 730.4 L799.0 728.8 L811.9 727.3 L824.1 725.7 L835.0 724.2 L844.2 722.7 L851.0 721.2 L855.3 719.7 L856.8 718.2 M741.2 783.5 L742.7 781.9 L747.0 780.3 L753.8 778.7 L763.0 777.1 L773.9 775.5 L786.1 773.9 L799.0 772.3 L811.9 770.8 L824.1 769.2 L835.0 767.7 L844.2 766.2 L851.0 764.7 L855.3 763.2 L856.8 761.8 M741.2 827.0 L742.7 825.4 L747.0 823.8 L753.8 822.2 L763.0 820.6 L773.9 819.0 L786.1 817.4 L799.0 815.8 L811.9 814.3 L824.1 812.7 L835.0 811.2 L844.2 809.7 L851.0 808.2 L855.3 806.7 L856.8 805.2 M741.2 831.0 L742.7 831.0 L747.0 831.0 L753.8 831.0 L763.0 831.0 L773.9 830.9 L786.1 830.9 L799.0 830.9 L811.9 830.9 L824.1 830.9 L835.0 831.0 L844.2 831.0 L851.0 831.0 L855.3 831.0 L856.8 831.0" transform="translate(0 -2.0500000000000003)" fill="none" stroke="url(#ga1)" stroke-width="16.4" stroke-linejoin="round" stroke-linecap="round"/><path d="M741.2 479.0 L742.7 477.4 L747.0 475.8 L753.8 474.2 L763.0 472.6 L773.9 471.0 L786.1 469.4 L799.0 467.8 L811.9 466.3 L824.1 464.7 L835.0 463.2 L844.2 461.7 L851.0 460.2 L855.3 458.7 L856.8 457.2 M741.2 522.5 L742.7 520.9 L747.0 519.3 L753.8 517.7 L763.0 516.1 L773.9 514.5 L786.1 512.9 L799.0 511.3 L811.9 509.8 L824.1 508.2 L835.0 506.7 L844.2 505.2 L851.0 503.7 L855.3 502.2 L856.8 500.8 M741.2 566.0 L742.7 564.4 L747.0 562.8 L753.8 561.2 L763.0 559.6 L773.9 558.0 L786.1 556.4 L799.0 554.8 L811.9 553.3 L824.1 551.7 L835.0 550.2 L844.2 548.7 L851.0 547.2 L855.3 545.7 L856.8 544.2 M741.2 609.5 L742.7 607.9 L747.0 606.3 L753.8 604.7 L763.0 603.1 L773.9 601.5 L786.1 599.9 L799.0 598.3 L811.9 596.8 L824.1 595.2 L835.0 593.7 L844.2 592.2 L851.0 590.7 L855.3 589.2 L856.8 587.8 M741.2 653.0 L742.7 651.4 L747.0 649.8 L753.8 648.2 L763.0 646.6 L773.9 645.0 L786.1 643.4 L799.0 641.8 L811.9 640.3 L824.1 638.7 L835.0 637.2 L844.2 635.7 L851.0 634.2 L855.3 632.7 L856.8 631.2 M741.2 696.5 L742.7 694.9 L747.0 693.3 L753.8 691.7 L763.0 690.1 L773.9 688.5 L786.1 686.9 L799.0 685.3 L811.9 683.8 L824.1 682.2 L835.0 680.7 L844.2 679.2 L851.0 677.7 L855.3 676.2 L856.8 674.8 M741.2 740.0 L742.7 738.4 L747.0 736.8 L753.8 735.2 L763.0 733.6 L773.9 732.0 L786.1 730.4 L799.0 728.8 L811.9 727.3 L824.1 725.7 L835.0 724.2 L844.2 722.7 L851.0 721.2 L855.3 719.7 L856.8 718.2 M741.2 783.5 L742.7 781.9 L747.0 780.3 L753.8 778.7 L763.0 777.1 L773.9 775.5 L786.1 773.9 L799.0 772.3 L811.9 770.8 L824.1 769.2 L835.0 767.7 L844.2 766.2 L851.0 764.7 L855.3 763.2 L856.8 761.8 M741.2 827.0 L742.7 825.4 L747.0 823.8 L753.8 822.2 L763.0 820.6 L773.9 819.0 L786.1 817.4 L799.0 815.8 L811.9 814.3 L824.1 812.7 L835.0 811.2 L844.2 809.7 L851.0 808.2 L855.3 806.7 L856.8 805.2 M741.2 831.0 L742.7 831.0 L747.0 831.0 L753.8 831.0 L763.0 831.0 L773.9 830.9 L786.1 830.9 L799.0 830.9 L811.9 830.9 L824.1 830.9 L835.0 831.0 L844.2 831.0 L851.0 831.0 L855.3 831.0 L856.8 831.0" transform="translate(0 -3.2800000000000002)" fill="none" stroke="url(#ga2)" stroke-width="11.9" stroke-linejoin="round" stroke-linecap="round"/><path d="M741.2 479.0 L742.7 477.4 L747.0 475.8 L753.8 474.2 L763.0 472.6 L773.9 471.0 L786.1 469.4 L799.0 467.8 L811.9 466.3 L824.1 464.7 L835.0 463.2 L844.2 461.7 L851.0 460.2 L855.3 458.7 L856.8 457.2 M741.2 522.5 L742.7 520.9 L747.0 519.3 L753.8 517.7 L763.0 516.1 L773.9 514.5 L786.1 512.9 L799.0 511.3 L811.9 509.8 L824.1 508.2 L835.0 506.7 L844.2 505.2 L851.0 503.7 L855.3 502.2 L856.8 500.8 M741.2 566.0 L742.7 564.4 L747.0 562.8 L753.8 561.2 L763.0 559.6 L773.9 558.0 L786.1 556.4 L799.0 554.8 L811.9 553.3 L824.1 551.7 L835.0 550.2 L844.2 548.7 L851.0 547.2 L855.3 545.7 L856.8 544.2 M741.2 609.5 L742.7 607.9 L747.0 606.3 L753.8 604.7 L763.0 603.1 L773.9 601.5 L786.1 599.9 L799.0 598.3 L811.9 596.8 L824.1 595.2 L835.0 593.7 L844.2 592.2 L851.0 590.7 L855.3 589.2 L856.8 587.8 M741.2 653.0 L742.7 651.4 L747.0 649.8 L753.8 648.2 L763.0 646.6 L773.9 645.0 L786.1 643.4 L799.0 641.8 L811.9 640.3 L824.1 638.7 L835.0 637.2 L844.2 635.7 L851.0 634.2 L855.3 632.7 L856.8 631.2 M741.2 696.5 L742.7 694.9 L747.0 693.3 L753.8 691.7 L763.0 690.1 L773.9 688.5 L786.1 686.9 L799.0 685.3 L811.9 683.8 L824.1 682.2 L835.0 680.7 L844.2 679.2 L851.0 677.7 L855.3 676.2 L856.8 674.8 M741.2 740.0 L742.7 738.4 L747.0 736.8 L753.8 735.2 L763.0 733.6 L773.9 732.0 L786.1 730.4 L799.0 728.8 L811.9 727.3 L824.1 725.7 L835.0 724.2 L844.2 722.7 L851.0 721.2 L855.3 719.7 L856.8 718.2 M741.2 783.5 L742.7 781.9 L747.0 780.3 L753.8 778.7 L763.0 777.1 L773.9 775.5 L786.1 773.9 L799.0 772.3 L811.9 770.8 L824.1 769.2 L835.0 767.7 L844.2 766.2 L851.0 764.7 L855.3 763.2 L856.8 761.8 M741.2 827.0 L742.7 825.4 L747.0 823.8 L753.8 822.2 L763.0 820.6 L773.9 819.0 L786.1 817.4 L799.0 815.8 L811.9 814.3 L824.1 812.7 L835.0 811.2 L844.2 809.7 L851.0 808.2 L855.3 806.7 L856.8 805.2 M741.2 831.0 L742.7 831.0 L747.0 831.0 L753.8 831.0 L763.0 831.0 L773.9 830.9 L786.1 830.9 L799.0 830.9 L811.9 830.9 L824.1 830.9 L835.0 831.0 L844.2 831.0 L851.0 831.0 L855.3 831.0 L856.8 831.0" transform="translate(0 -4.1000000000000005)" fill="none" stroke="url(#ga3)" stroke-width="8.2" stroke-linejoin="round" stroke-linecap="round"/><path d="M741.2 479.0 L742.7 477.4 L747.0 475.8 L753.8 474.2 L763.0 472.6 L773.9 471.0 L786.1 469.4 L799.0 467.8 L811.9 466.3 L824.1 464.7 L835.0 463.2 L844.2 461.7 L851.0 460.2 L855.3 458.7 L856.8 457.2 M741.2 522.5 L742.7 520.9 L747.0 519.3 L753.8 517.7 L763.0 516.1 L773.9 514.5 L786.1 512.9 L799.0 511.3 L811.9 509.8 L824.1 508.2 L835.0 506.7 L844.2 505.2 L851.0 503.7 L855.3 502.2 L856.8 500.8 M741.2 566.0 L742.7 564.4 L747.0 562.8 L753.8 561.2 L763.0 559.6 L773.9 558.0 L786.1 556.4 L799.0 554.8 L811.9 553.3 L824.1 551.7 L835.0 550.2 L844.2 548.7 L851.0 547.2 L855.3 545.7 L856.8 544.2 M741.2 609.5 L742.7 607.9 L747.0 606.3 L753.8 604.7 L763.0 603.1 L773.9 601.5 L786.1 599.9 L799.0 598.3 L811.9 596.8 L824.1 595.2 L835.0 593.7 L844.2 592.2 L851.0 590.7 L855.3 589.2 L856.8 587.8 M741.2 653.0 L742.7 651.4 L747.0 649.8 L753.8 648.2 L763.0 646.6 L773.9 645.0 L786.1 643.4 L799.0 641.8 L811.9 640.3 L824.1 638.7 L835.0 637.2 L844.2 635.7 L851.0 634.2 L855.3 632.7 L856.8 631.2 M741.2 696.5 L742.7 694.9 L747.0 693.3 L753.8 691.7 L763.0 690.1 L773.9 688.5 L786.1 686.9 L799.0 685.3 L811.9 683.8 L824.1 682.2 L835.0 680.7 L844.2 679.2 L851.0 677.7 L855.3 676.2 L856.8 674.8 M741.2 740.0 L742.7 738.4 L747.0 736.8 L753.8 735.2 L763.0 733.6 L773.9 732.0 L786.1 730.4 L799.0 728.8 L811.9 727.3 L824.1 725.7 L835.0 724.2 L844.2 722.7 L851.0 721.2 L855.3 719.7 L856.8 718.2 M741.2 783.5 L742.7 781.9 L747.0 780.3 L753.8 778.7 L763.0 777.1 L773.9 775.5 L786.1 773.9 L799.0 772.3 L811.9 770.8 L824.1 769.2 L835.0 767.7 L844.2 766.2 L851.0 764.7 L855.3 763.2 L856.8 761.8 M741.2 827.0 L742.7 825.4 L747.0 823.8 L753.8 822.2 L763.0 820.6 L773.9 819.0 L786.1 817.4 L799.0 815.8 L811.9 814.3 L824.1 812.7 L835.0 811.2 L844.2 809.7 L851.0 808.2 L855.3 806.7 L856.8 805.2 M741.2 831.0 L742.7 831.0 L747.0 831.0 L753.8 831.0 L763.0 831.0 L773.9 830.9 L786.1 830.9 L799.0 830.9 L811.9 830.9 L824.1 830.9 L835.0 831.0 L844.2 831.0 L851.0 831.0 L855.3 831.0 L856.8 831.0" transform="translate(0 -5.125)" fill="none" stroke="url(#ga4)" stroke-width="4.1" stroke-linejoin="round" stroke-linecap="round"/></g><g clip-path="url(#c2)"><linearGradient id="gb0" gradientUnits="userSpaceOnUse" x1="932" y1="0" x2="1068" y2="0"><stop offset="0" stop-color="#2c2e32"/><stop offset="0.12" stop-color="#6a6c70"/><stop offset="0.5" stop-color="#88898c"/><stop offset="0.88" stop-color="#6a6c70"/><stop offset="1" stop-color="#2c2e32"/></linearGradient><linearGradient id="gb1" gradientUnits="userSpaceOnUse" x1="932" y1="0" x2="1068" y2="0"><stop offset="0" stop-color="#6c6e72"/><stop offset="0.12" stop-color="#a8a9ac"/><stop offset="0.5" stop-color="#bcbcbe"/><stop offset="0.88" stop-color="#a8a9ac"/><stop offset="1" stop-color="#66686c"/></linearGradient><linearGradient id="gb2" gradientUnits="userSpaceOnUse" x1="932" y1="0" x2="1068" y2="0"><stop offset="0" stop-color="#808286"/><stop offset="0.15" stop-color="#c4c4c6"/><stop offset="0.45" stop-color="#d8d8da"/><stop offset="0.85" stop-color="#c0c0c2"/><stop offset="1" stop-color="#7a7c80"/></linearGradient><linearGradient id="gb3" gradientUnits="userSpaceOnUse" x1="932" y1="0" x2="1068" y2="0"><stop offset="0" stop-color="#9a9b9e"/><stop offset="0.18" stop-color="#e4e4e6"/><stop offset="0.5" stop-color="#f2f2f2"/><stop offset="0.82" stop-color="#dedee0"/><stop offset="1" stop-color="#8e9094"/></linearGradient><linearGradient id="gb4" gradientUnits="userSpaceOnUse" x1="932" y1="0" x2="1068" y2="0"><stop offset="0" stop-color="#b0b0b2"/><stop offset="0.2" stop-color="#f6f6f6"/><stop offset="0.5" stop-color="#fdfdfd"/><stop offset="0.8" stop-color="#f0f0f0"/><stop offset="1" stop-color="#a0a0a2"/></linearGradient><path d="M941.8 571.0 L943.2 571.5 L947.5 572.0 L954.5 572.4 L963.7 572.9 L974.7 573.4 L987.0 573.8 L1000.0 574.3 L1013.0 574.7 L1025.3 575.2 L1036.3 575.6 L1045.5 576.1 L1052.5 576.5 L1056.8 577.0 L1058.2 577.4 M941.8 592.0 L943.2 593.1 L947.5 594.2 L954.5 595.3 L963.7 596.4 L974.7 597.5 L987.0 598.5 L1000.0 599.6 L1013.0 600.6 L1025.3 601.7 L1036.3 602.7 L1045.5 603.7 L1052.5 604.6 L1056.8 605.6 L1058.2 606.6 M941.8 621.2 L943.2 622.3 L947.5 623.4 L954.5 624.5 L963.7 625.6 L974.7 626.7 L987.0 627.7 L1000.0 628.8 L1013.0 629.8 L1025.3 630.8 L1036.3 631.8 L1045.5 632.8 L1052.5 633.8 L1056.8 634.8 L1058.2 635.8 M941.8 650.4 L943.2 651.5 L947.5 652.6 L954.5 653.7 L963.7 654.8 L974.7 655.9 L987.0 656.9 L1000.0 658.0 L1013.0 659.0 L1025.3 660.0 L1036.3 661.0 L1045.5 662.0 L1052.5 663.0 L1056.8 664.0 L1058.2 665.0 M941.8 679.6 L943.2 680.7 L947.5 681.8 L954.5 682.9 L963.7 684.0 L974.7 685.1 L987.0 686.1 L1000.0 687.2 L1013.0 688.2 L1025.3 689.2 L1036.3 690.2 L1045.5 691.2 L1052.5 692.2 L1056.8 693.2 L1058.2 694.2 M941.8 708.8 L943.2 709.9 L947.5 711.0 L954.5 712.1 L963.7 713.2 L974.7 714.2 L987.0 715.3 L1000.0 716.4 L1013.0 717.4 L1025.3 718.4 L1036.3 719.4 L1045.5 720.4 L1052.5 721.4 L1056.8 722.4 L1058.2 723.4 M941.8 738.0 L943.2 739.1 L947.5 740.2 L954.5 741.3 L963.7 742.4 L974.7 743.4 L987.0 744.5 L1000.0 745.5 L1013.0 746.6 L1025.3 747.6 L1036.3 748.6 L1045.5 749.6 L1052.5 750.6 L1056.8 751.6 L1058.2 752.5 M941.8 767.1 L943.2 768.2 L947.5 769.4 L954.5 770.5 L963.7 771.5 L974.7 772.6 L987.0 773.7 L1000.0 774.7 L1013.0 775.8 L1025.3 776.8 L1036.3 777.8 L1045.5 778.8 L1052.5 779.8 L1056.8 780.8 L1058.2 781.7 M941.8 796.3 L943.2 797.4 L947.5 798.5 L954.5 799.6 L963.7 800.7 L974.7 801.8 L987.0 802.9 L1000.0 803.9 L1013.0 805.0 L1025.3 806.0 L1036.3 807.0 L1045.5 808.0 L1052.5 809.0 L1056.8 809.9 L1058.2 810.9 M941.8 825.5 L943.2 826.0 L947.5 826.5 L954.5 827.0 L963.7 827.5 L974.7 828.0 L987.0 828.4 L1000.0 828.9 L1013.0 829.4 L1025.3 829.8 L1036.3 830.3 L1045.5 830.7 L1052.5 831.1 L1056.8 831.6 L1058.2 832.0" transform="translate(0 0)" fill="none" stroke="url(#gb0)" stroke-width="19.5" stroke-linejoin="round" stroke-linecap="round"/><path d="M941.8 571.0 L943.2 571.5 L947.5 572.0 L954.5 572.4 L963.7 572.9 L974.7 573.4 L987.0 573.8 L1000.0 574.3 L1013.0 574.7 L1025.3 575.2 L1036.3 575.6 L1045.5 576.1 L1052.5 576.5 L1056.8 577.0 L1058.2 577.4 M941.8 592.0 L943.2 593.1 L947.5 594.2 L954.5 595.3 L963.7 596.4 L974.7 597.5 L987.0 598.5 L1000.0 599.6 L1013.0 600.6 L1025.3 601.7 L1036.3 602.7 L1045.5 603.7 L1052.5 604.6 L1056.8 605.6 L1058.2 606.6 M941.8 621.2 L943.2 622.3 L947.5 623.4 L954.5 624.5 L963.7 625.6 L974.7 626.7 L987.0 627.7 L1000.0 628.8 L1013.0 629.8 L1025.3 630.8 L1036.3 631.8 L1045.5 632.8 L1052.5 633.8 L1056.8 634.8 L1058.2 635.8 M941.8 650.4 L943.2 651.5 L947.5 652.6 L954.5 653.7 L963.7 654.8 L974.7 655.9 L987.0 656.9 L1000.0 658.0 L1013.0 659.0 L1025.3 660.0 L1036.3 661.0 L1045.5 662.0 L1052.5 663.0 L1056.8 664.0 L1058.2 665.0 M941.8 679.6 L943.2 680.7 L947.5 681.8 L954.5 682.9 L963.7 684.0 L974.7 685.1 L987.0 686.1 L1000.0 687.2 L1013.0 688.2 L1025.3 689.2 L1036.3 690.2 L1045.5 691.2 L1052.5 692.2 L1056.8 693.2 L1058.2 694.2 M941.8 708.8 L943.2 709.9 L947.5 711.0 L954.5 712.1 L963.7 713.2 L974.7 714.2 L987.0 715.3 L1000.0 716.4 L1013.0 717.4 L1025.3 718.4 L1036.3 719.4 L1045.5 720.4 L1052.5 721.4 L1056.8 722.4 L1058.2 723.4 M941.8 738.0 L943.2 739.1 L947.5 740.2 L954.5 741.3 L963.7 742.4 L974.7 743.4 L987.0 744.5 L1000.0 745.5 L1013.0 746.6 L1025.3 747.6 L1036.3 748.6 L1045.5 749.6 L1052.5 750.6 L1056.8 751.6 L1058.2 752.5 M941.8 767.1 L943.2 768.2 L947.5 769.4 L954.5 770.5 L963.7 771.5 L974.7 772.6 L987.0 773.7 L1000.0 774.7 L1013.0 775.8 L1025.3 776.8 L1036.3 777.8 L1045.5 778.8 L1052.5 779.8 L1056.8 780.8 L1058.2 781.7 M941.8 796.3 L943.2 797.4 L947.5 798.5 L954.5 799.6 L963.7 800.7 L974.7 801.8 L987.0 802.9 L1000.0 803.9 L1013.0 805.0 L1025.3 806.0 L1036.3 807.0 L1045.5 808.0 L1052.5 809.0 L1056.8 809.9 L1058.2 810.9 M941.8 825.5 L943.2 826.0 L947.5 826.5 L954.5 827.0 L963.7 827.5 L974.7 828.0 L987.0 828.4 L1000.0 828.9 L1013.0 829.4 L1025.3 829.8 L1036.3 830.3 L1045.5 830.7 L1052.5 831.1 L1056.8 831.6 L1058.2 832.0" transform="translate(0 -1.9500000000000002)" fill="none" stroke="url(#gb1)" stroke-width="15.6" stroke-linejoin="round" stroke-linecap="round"/><path d="M941.8 571.0 L943.2 571.5 L947.5 572.0 L954.5 572.4 L963.7 572.9 L974.7 573.4 L987.0 573.8 L1000.0 574.3 L1013.0 574.7 L1025.3 575.2 L1036.3 575.6 L1045.5 576.1 L1052.5 576.5 L1056.8 577.0 L1058.2 577.4 M941.8 592.0 L943.2 593.1 L947.5 594.2 L954.5 595.3 L963.7 596.4 L974.7 597.5 L987.0 598.5 L1000.0 599.6 L1013.0 600.6 L1025.3 601.7 L1036.3 602.7 L1045.5 603.7 L1052.5 604.6 L1056.8 605.6 L1058.2 606.6 M941.8 621.2 L943.2 622.3 L947.5 623.4 L954.5 624.5 L963.7 625.6 L974.7 626.7 L987.0 627.7 L1000.0 628.8 L1013.0 629.8 L1025.3 630.8 L1036.3 631.8 L1045.5 632.8 L1052.5 633.8 L1056.8 634.8 L1058.2 635.8 M941.8 650.4 L943.2 651.5 L947.5 652.6 L954.5 653.7 L963.7 654.8 L974.7 655.9 L987.0 656.9 L1000.0 658.0 L1013.0 659.0 L1025.3 660.0 L1036.3 661.0 L1045.5 662.0 L1052.5 663.0 L1056.8 664.0 L1058.2 665.0 M941.8 679.6 L943.2 680.7 L947.5 681.8 L954.5 682.9 L963.7 684.0 L974.7 685.1 L987.0 686.1 L1000.0 687.2 L1013.0 688.2 L1025.3 689.2 L1036.3 690.2 L1045.5 691.2 L1052.5 692.2 L1056.8 693.2 L1058.2 694.2 M941.8 708.8 L943.2 709.9 L947.5 711.0 L954.5 712.1 L963.7 713.2 L974.7 714.2 L987.0 715.3 L1000.0 716.4 L1013.0 717.4 L1025.3 718.4 L1036.3 719.4 L1045.5 720.4 L1052.5 721.4 L1056.8 722.4 L1058.2 723.4 M941.8 738.0 L943.2 739.1 L947.5 740.2 L954.5 741.3 L963.7 742.4 L974.7 743.4 L987.0 744.5 L1000.0 745.5 L1013.0 746.6 L1025.3 747.6 L1036.3 748.6 L1045.5 749.6 L1052.5 750.6 L1056.8 751.6 L1058.2 752.5 M941.8 767.1 L943.2 768.2 L947.5 769.4 L954.5 770.5 L963.7 771.5 L974.7 772.6 L987.0 773.7 L1000.0 774.7 L1013.0 775.8 L1025.3 776.8 L1036.3 777.8 L1045.5 778.8 L1052.5 779.8 L1056.8 780.8 L1058.2 781.7 M941.8 796.3 L943.2 797.4 L947.5 798.5 L954.5 799.6 L963.7 800.7 L974.7 801.8 L987.0 802.9 L1000.0 803.9 L1013.0 805.0 L1025.3 806.0 L1036.3 807.0 L1045.5 808.0 L1052.5 809.0 L1056.8 809.9 L1058.2 810.9 M941.8 825.5 L943.2 826.0 L947.5 826.5 L954.5 827.0 L963.7 827.5 L974.7 828.0 L987.0 828.4 L1000.0 828.9 L1013.0 829.4 L1025.3 829.8 L1036.3 830.3 L1045.5 830.7 L1052.5 831.1 L1056.8 831.6 L1058.2 832.0" transform="translate(0 -3.12)" fill="none" stroke="url(#gb2)" stroke-width="11.3" stroke-linejoin="round" stroke-linecap="round"/><path d="M941.8 571.0 L943.2 571.5 L947.5 572.0 L954.5 572.4 L963.7 572.9 L974.7 573.4 L987.0 573.8 L1000.0 574.3 L1013.0 574.7 L1025.3 575.2 L1036.3 575.6 L1045.5 576.1 L1052.5 576.5 L1056.8 577.0 L1058.2 577.4 M941.8 592.0 L943.2 593.1 L947.5 594.2 L954.5 595.3 L963.7 596.4 L974.7 597.5 L987.0 598.5 L1000.0 599.6 L1013.0 600.6 L1025.3 601.7 L1036.3 602.7 L1045.5 603.7 L1052.5 604.6 L1056.8 605.6 L1058.2 606.6 M941.8 621.2 L943.2 622.3 L947.5 623.4 L954.5 624.5 L963.7 625.6 L974.7 626.7 L987.0 627.7 L1000.0 628.8 L1013.0 629.8 L1025.3 630.8 L1036.3 631.8 L1045.5 632.8 L1052.5 633.8 L1056.8 634.8 L1058.2 635.8 M941.8 650.4 L943.2 651.5 L947.5 652.6 L954.5 653.7 L963.7 654.8 L974.7 655.9 L987.0 656.9 L1000.0 658.0 L1013.0 659.0 L1025.3 660.0 L1036.3 661.0 L1045.5 662.0 L1052.5 663.0 L1056.8 664.0 L1058.2 665.0 M941.8 679.6 L943.2 680.7 L947.5 681.8 L954.5 682.9 L963.7 684.0 L974.7 685.1 L987.0 686.1 L1000.0 687.2 L1013.0 688.2 L1025.3 689.2 L1036.3 690.2 L1045.5 691.2 L1052.5 692.2 L1056.8 693.2 L1058.2 694.2 M941.8 708.8 L943.2 709.9 L947.5 711.0 L954.5 712.1 L963.7 713.2 L974.7 714.2 L987.0 715.3 L1000.0 716.4 L1013.0 717.4 L1025.3 718.4 L1036.3 719.4 L1045.5 720.4 L1052.5 721.4 L1056.8 722.4 L1058.2 723.4 M941.8 738.0 L943.2 739.1 L947.5 740.2 L954.5 741.3 L963.7 742.4 L974.7 743.4 L987.0 744.5 L1000.0 745.5 L1013.0 746.6 L1025.3 747.6 L1036.3 748.6 L1045.5 749.6 L1052.5 750.6 L1056.8 751.6 L1058.2 752.5 M941.8 767.1 L943.2 768.2 L947.5 769.4 L954.5 770.5 L963.7 771.5 L974.7 772.6 L987.0 773.7 L1000.0 774.7 L1013.0 775.8 L1025.3 776.8 L1036.3 777.8 L1045.5 778.8 L1052.5 779.8 L1056.8 780.8 L1058.2 781.7 M941.8 796.3 L943.2 797.4 L947.5 798.5 L954.5 799.6 L963.7 800.7 L974.7 801.8 L987.0 802.9 L1000.0 803.9 L1013.0 805.0 L1025.3 806.0 L1036.3 807.0 L1045.5 808.0 L1052.5 809.0 L1056.8 809.9 L1058.2 810.9 M941.8 825.5 L943.2 826.0 L947.5 826.5 L954.5 827.0 L963.7 827.5 L974.7 828.0 L987.0 828.4 L1000.0 828.9 L1013.0 829.4 L1025.3 829.8 L1036.3 830.3 L1045.5 830.7 L1052.5 831.1 L1056.8 831.6 L1058.2 832.0" transform="translate(0 -3.9000000000000004)" fill="none" stroke="url(#gb3)" stroke-width="7.8" stroke-linejoin="round" stroke-linecap="round"/><path d="M941.8 571.0 L943.2 571.5 L947.5 572.0 L954.5 572.4 L963.7 572.9 L974.7 573.4 L987.0 573.8 L1000.0 574.3 L1013.0 574.7 L1025.3 575.2 L1036.3 575.6 L1045.5 576.1 L1052.5 576.5 L1056.8 577.0 L1058.2 577.4 M941.8 592.0 L943.2 593.1 L947.5 594.2 L954.5 595.3 L963.7 596.4 L974.7 597.5 L987.0 598.5 L1000.0 599.6 L1013.0 600.6 L1025.3 601.7 L1036.3 602.7 L1045.5 603.7 L1052.5 604.6 L1056.8 605.6 L1058.2 606.6 M941.8 621.2 L943.2 622.3 L947.5 623.4 L954.5 624.5 L963.7 625.6 L974.7 626.7 L987.0 627.7 L1000.0 628.8 L1013.0 629.8 L1025.3 630.8 L1036.3 631.8 L1045.5 632.8 L1052.5 633.8 L1056.8 634.8 L1058.2 635.8 M941.8 650.4 L943.2 651.5 L947.5 652.6 L954.5 653.7 L963.7 654.8 L974.7 655.9 L987.0 656.9 L1000.0 658.0 L1013.0 659.0 L1025.3 660.0 L1036.3 661.0 L1045.5 662.0 L1052.5 663.0 L1056.8 664.0 L1058.2 665.0 M941.8 679.6 L943.2 680.7 L947.5 681.8 L954.5 682.9 L963.7 684.0 L974.7 685.1 L987.0 686.1 L1000.0 687.2 L1013.0 688.2 L1025.3 689.2 L1036.3 690.2 L1045.5 691.2 L1052.5 692.2 L1056.8 693.2 L1058.2 694.2 M941.8 708.8 L943.2 709.9 L947.5 711.0 L954.5 712.1 L963.7 713.2 L974.7 714.2 L987.0 715.3 L1000.0 716.4 L1013.0 717.4 L1025.3 718.4 L1036.3 719.4 L1045.5 720.4 L1052.5 721.4 L1056.8 722.4 L1058.2 723.4 M941.8 738.0 L943.2 739.1 L947.5 740.2 L954.5 741.3 L963.7 742.4 L974.7 743.4 L987.0 744.5 L1000.0 745.5 L1013.0 746.6 L1025.3 747.6 L1036.3 748.6 L1045.5 749.6 L1052.5 750.6 L1056.8 751.6 L1058.2 752.5 M941.8 767.1 L943.2 768.2 L947.5 769.4 L954.5 770.5 L963.7 771.5 L974.7 772.6 L987.0 773.7 L1000.0 774.7 L1013.0 775.8 L1025.3 776.8 L1036.3 777.8 L1045.5 778.8 L1052.5 779.8 L1056.8 780.8 L1058.2 781.7 M941.8 796.3 L943.2 797.4 L947.5 798.5 L954.5 799.6 L963.7 800.7 L974.7 801.8 L987.0 802.9 L1000.0 803.9 L1013.0 805.0 L1025.3 806.0 L1036.3 807.0 L1045.5 808.0 L1052.5 809.0 L1056.8 809.9 L1058.2 810.9 M941.8 825.5 L943.2 826.0 L947.5 826.5 L954.5 827.0 L963.7 827.5 L974.7 828.0 L987.0 828.4 L1000.0 828.9 L1013.0 829.4 L1025.3 829.8 L1036.3 830.3 L1045.5 830.7 L1052.5 831.1 L1056.8 831.6 L1058.2 832.0" transform="translate(0 -4.875)" fill="none" stroke="url(#gb4)" stroke-width="3.9" stroke-linejoin="round" stroke-linecap="round"/><path d="M941.8 592.0 L943.2 590.9 L947.5 589.8 L954.5 588.7 L963.7 587.6 L974.7 586.5 L987.0 585.5 L1000.0 584.4 L1013.0 583.4 L1025.3 582.3 L1036.3 581.3 L1045.5 580.3 L1052.5 579.4 L1056.8 578.4 L1058.2 577.4 M941.8 621.2 L943.2 620.1 L947.5 619.0 L954.5 617.9 L963.7 616.8 L974.7 615.7 L987.0 614.6 L1000.0 613.6 L1013.0 612.6 L1025.3 611.5 L1036.3 610.5 L1045.5 609.5 L1052.5 608.5 L1056.8 607.6 L1058.2 606.6 M941.8 650.4 L943.2 649.3 L947.5 648.2 L954.5 647.1 L963.7 646.0 L974.7 644.9 L987.0 643.8 L1000.0 642.8 L1013.0 641.7 L1025.3 640.7 L1036.3 639.7 L1045.5 638.7 L1052.5 637.7 L1056.8 636.8 L1058.2 635.8 M941.8 679.6 L943.2 678.5 L947.5 677.4 L954.5 676.3 L963.7 675.2 L974.7 674.1 L987.0 673.0 L1000.0 672.0 L1013.0 670.9 L1025.3 669.9 L1036.3 668.9 L1045.5 667.9 L1052.5 666.9 L1056.8 666.0 L1058.2 665.0 M941.8 708.8 L943.2 707.7 L947.5 706.5 L954.5 705.4 L963.7 704.4 L974.7 703.3 L987.0 702.2 L1000.0 701.2 L1013.0 700.1 L1025.3 699.1 L1036.3 698.1 L1045.5 697.1 L1052.5 696.1 L1056.8 695.1 L1058.2 694.2 M941.8 738.0 L943.2 736.8 L947.5 735.7 L954.5 734.6 L963.7 733.5 L974.7 732.5 L987.0 731.4 L1000.0 730.4 L1013.0 729.3 L1025.3 728.3 L1036.3 727.3 L1045.5 726.3 L1052.5 725.3 L1056.8 724.3 L1058.2 723.4 M941.8 767.1 L943.2 766.0 L947.5 764.9 L954.5 763.8 L963.7 762.7 L974.7 761.7 L987.0 760.6 L1000.0 759.5 L1013.0 758.5 L1025.3 757.5 L1036.3 756.5 L1045.5 755.5 L1052.5 754.5 L1056.8 753.5 L1058.2 752.5 M941.8 796.3 L943.2 795.2 L947.5 794.1 L954.5 793.0 L963.7 791.9 L974.7 790.8 L987.0 789.8 L1000.0 788.7 L1013.0 787.7 L1025.3 786.7 L1036.3 785.7 L1045.5 784.7 L1052.5 783.7 L1056.8 782.7 L1058.2 781.7 M941.8 825.5 L943.2 824.4 L947.5 823.3 L954.5 822.2 L963.7 821.1 L974.7 820.0 L987.0 819.0 L1000.0 817.9 L1013.0 816.9 L1025.3 815.9 L1036.3 814.9 L1045.5 813.9 L1052.5 812.9 L1056.8 811.9 L1058.2 810.9 M941.8 832.0 L943.2 832.0 L947.5 832.0 L954.5 832.0 L963.7 832.0 L974.7 831.9 L987.0 831.9 L1000.0 831.9 L1013.0 831.9 L1025.3 831.9 L1036.3 832.0 L1045.5 832.0 L1052.5 832.0 L1056.8 832.0 L1058.2 832.0" transform="translate(0 0)" fill="none" stroke="url(#gb0)" stroke-width="19.5" stroke-linejoin="round" stroke-linecap="round"/><path d="M941.8 592.0 L943.2 590.9 L947.5 589.8 L954.5 588.7 L963.7 587.6 L974.7 586.5 L987.0 585.5 L1000.0 584.4 L1013.0 583.4 L1025.3 582.3 L1036.3 581.3 L1045.5 580.3 L1052.5 579.4 L1056.8 578.4 L1058.2 577.4 M941.8 621.2 L943.2 620.1 L947.5 619.0 L954.5 617.9 L963.7 616.8 L974.7 615.7 L987.0 614.6 L1000.0 613.6 L1013.0 612.6 L1025.3 611.5 L1036.3 610.5 L1045.5 609.5 L1052.5 608.5 L1056.8 607.6 L1058.2 606.6 M941.8 650.4 L943.2 649.3 L947.5 648.2 L954.5 647.1 L963.7 646.0 L974.7 644.9 L987.0 643.8 L1000.0 642.8 L1013.0 641.7 L1025.3 640.7 L1036.3 639.7 L1045.5 638.7 L1052.5 637.7 L1056.8 636.8 L1058.2 635.8 M941.8 679.6 L943.2 678.5 L947.5 677.4 L954.5 676.3 L963.7 675.2 L974.7 674.1 L987.0 673.0 L1000.0 672.0 L1013.0 670.9 L1025.3 669.9 L1036.3 668.9 L1045.5 667.9 L1052.5 666.9 L1056.8 666.0 L1058.2 665.0 M941.8 708.8 L943.2 707.7 L947.5 706.5 L954.5 705.4 L963.7 704.4 L974.7 703.3 L987.0 702.2 L1000.0 701.2 L1013.0 700.1 L1025.3 699.1 L1036.3 698.1 L1045.5 697.1 L1052.5 696.1 L1056.8 695.1 L1058.2 694.2 M941.8 738.0 L943.2 736.8 L947.5 735.7 L954.5 734.6 L963.7 733.5 L974.7 732.5 L987.0 731.4 L1000.0 730.4 L1013.0 729.3 L1025.3 728.3 L1036.3 727.3 L1045.5 726.3 L1052.5 725.3 L1056.8 724.3 L1058.2 723.4 M941.8 767.1 L943.2 766.0 L947.5 764.9 L954.5 763.8 L963.7 762.7 L974.7 761.7 L987.0 760.6 L1000.0 759.5 L1013.0 758.5 L1025.3 757.5 L1036.3 756.5 L1045.5 755.5 L1052.5 754.5 L1056.8 753.5 L1058.2 752.5 M941.8 796.3 L943.2 795.2 L947.5 794.1 L954.5 793.0 L963.7 791.9 L974.7 790.8 L987.0 789.8 L1000.0 788.7 L1013.0 787.7 L1025.3 786.7 L1036.3 785.7 L1045.5 784.7 L1052.5 783.7 L1056.8 782.7 L1058.2 781.7 M941.8 825.5 L943.2 824.4 L947.5 823.3 L954.5 822.2 L963.7 821.1 L974.7 820.0 L987.0 819.0 L1000.0 817.9 L1013.0 816.9 L1025.3 815.9 L1036.3 814.9 L1045.5 813.9 L1052.5 812.9 L1056.8 811.9 L1058.2 810.9 M941.8 832.0 L943.2 832.0 L947.5 832.0 L954.5 832.0 L963.7 832.0 L974.7 831.9 L987.0 831.9 L1000.0 831.9 L1013.0 831.9 L1025.3 831.9 L1036.3 832.0 L1045.5 832.0 L1052.5 832.0 L1056.8 832.0 L1058.2 832.0" transform="translate(0 -1.9500000000000002)" fill="none" stroke="url(#gb1)" stroke-width="15.6" stroke-linejoin="round" stroke-linecap="round"/><path d="M941.8 592.0 L943.2 590.9 L947.5 589.8 L954.5 588.7 L963.7 587.6 L974.7 586.5 L987.0 585.5 L1000.0 584.4 L1013.0 583.4 L1025.3 582.3 L1036.3 581.3 L1045.5 580.3 L1052.5 579.4 L1056.8 578.4 L1058.2 577.4 M941.8 621.2 L943.2 620.1 L947.5 619.0 L954.5 617.9 L963.7 616.8 L974.7 615.7 L987.0 614.6 L1000.0 613.6 L1013.0 612.6 L1025.3 611.5 L1036.3 610.5 L1045.5 609.5 L1052.5 608.5 L1056.8 607.6 L1058.2 606.6 M941.8 650.4 L943.2 649.3 L947.5 648.2 L954.5 647.1 L963.7 646.0 L974.7 644.9 L987.0 643.8 L1000.0 642.8 L1013.0 641.7 L1025.3 640.7 L1036.3 639.7 L1045.5 638.7 L1052.5 637.7 L1056.8 636.8 L1058.2 635.8 M941.8 679.6 L943.2 678.5 L947.5 677.4 L954.5 676.3 L963.7 675.2 L974.7 674.1 L987.0 673.0 L1000.0 672.0 L1013.0 670.9 L1025.3 669.9 L1036.3 668.9 L1045.5 667.9 L1052.5 666.9 L1056.8 666.0 L1058.2 665.0 M941.8 708.8 L943.2 707.7 L947.5 706.5 L954.5 705.4 L963.7 704.4 L974.7 703.3 L987.0 702.2 L1000.0 701.2 L1013.0 700.1 L1025.3 699.1 L1036.3 698.1 L1045.5 697.1 L1052.5 696.1 L1056.8 695.1 L1058.2 694.2 M941.8 738.0 L943.2 736.8 L947.5 735.7 L954.5 734.6 L963.7 733.5 L974.7 732.5 L987.0 731.4 L1000.0 730.4 L1013.0 729.3 L1025.3 728.3 L1036.3 727.3 L1045.5 726.3 L1052.5 725.3 L1056.8 724.3 L1058.2 723.4 M941.8 767.1 L943.2 766.0 L947.5 764.9 L954.5 763.8 L963.7 762.7 L974.7 761.7 L987.0 760.6 L1000.0 759.5 L1013.0 758.5 L1025.3 757.5 L1036.3 756.5 L1045.5 755.5 L1052.5 754.5 L1056.8 753.5 L1058.2 752.5 M941.8 796.3 L943.2 795.2 L947.5 794.1 L954.5 793.0 L963.7 791.9 L974.7 790.8 L987.0 789.8 L1000.0 788.7 L1013.0 787.7 L1025.3 786.7 L1036.3 785.7 L1045.5 784.7 L1052.5 783.7 L1056.8 782.7 L1058.2 781.7 M941.8 825.5 L943.2 824.4 L947.5 823.3 L954.5 822.2 L963.7 821.1 L974.7 820.0 L987.0 819.0 L1000.0 817.9 L1013.0 816.9 L1025.3 815.9 L1036.3 814.9 L1045.5 813.9 L1052.5 812.9 L1056.8 811.9 L1058.2 810.9 M941.8 832.0 L943.2 832.0 L947.5 832.0 L954.5 832.0 L963.7 832.0 L974.7 831.9 L987.0 831.9 L1000.0 831.9 L1013.0 831.9 L1025.3 831.9 L1036.3 832.0 L1045.5 832.0 L1052.5 832.0 L1056.8 832.0 L1058.2 832.0" transform="translate(0 -3.12)" fill="none" stroke="url(#gb2)" stroke-width="11.3" stroke-linejoin="round" stroke-linecap="round"/><path d="M941.8 592.0 L943.2 590.9 L947.5 589.8 L954.5 588.7 L963.7 587.6 L974.7 586.5 L987.0 585.5 L1000.0 584.4 L1013.0 583.4 L1025.3 582.3 L1036.3 581.3 L1045.5 580.3 L1052.5 579.4 L1056.8 578.4 L1058.2 577.4 M941.8 621.2 L943.2 620.1 L947.5 619.0 L954.5 617.9 L963.7 616.8 L974.7 615.7 L987.0 614.6 L1000.0 613.6 L1013.0 612.6 L1025.3 611.5 L1036.3 610.5 L1045.5 609.5 L1052.5 608.5 L1056.8 607.6 L1058.2 606.6 M941.8 650.4 L943.2 649.3 L947.5 648.2 L954.5 647.1 L963.7 646.0 L974.7 644.9 L987.0 643.8 L1000.0 642.8 L1013.0 641.7 L1025.3 640.7 L1036.3 639.7 L1045.5 638.7 L1052.5 637.7 L1056.8 636.8 L1058.2 635.8 M941.8 679.6 L943.2 678.5 L947.5 677.4 L954.5 676.3 L963.7 675.2 L974.7 674.1 L987.0 673.0 L1000.0 672.0 L1013.0 670.9 L1025.3 669.9 L1036.3 668.9 L1045.5 667.9 L1052.5 666.9 L1056.8 666.0 L1058.2 665.0 M941.8 708.8 L943.2 707.7 L947.5 706.5 L954.5 705.4 L963.7 704.4 L974.7 703.3 L987.0 702.2 L1000.0 701.2 L1013.0 700.1 L1025.3 699.1 L1036.3 698.1 L1045.5 697.1 L1052.5 696.1 L1056.8 695.1 L1058.2 694.2 M941.8 738.0 L943.2 736.8 L947.5 735.7 L954.5 734.6 L963.7 733.5 L974.7 732.5 L987.0 731.4 L1000.0 730.4 L1013.0 729.3 L1025.3 728.3 L1036.3 727.3 L1045.5 726.3 L1052.5 725.3 L1056.8 724.3 L1058.2 723.4 M941.8 767.1 L943.2 766.0 L947.5 764.9 L954.5 763.8 L963.7 762.7 L974.7 761.7 L987.0 760.6 L1000.0 759.5 L1013.0 758.5 L1025.3 757.5 L1036.3 756.5 L1045.5 755.5 L1052.5 754.5 L1056.8 753.5 L1058.2 752.5 M941.8 796.3 L943.2 795.2 L947.5 794.1 L954.5 793.0 L963.7 791.9 L974.7 790.8 L987.0 789.8 L1000.0 788.7 L1013.0 787.7 L1025.3 786.7 L1036.3 785.7 L1045.5 784.7 L1052.5 783.7 L1056.8 782.7 L1058.2 781.7 M941.8 825.5 L943.2 824.4 L947.5 823.3 L954.5 822.2 L963.7 821.1 L974.7 820.0 L987.0 819.0 L1000.0 817.9 L1013.0 816.9 L1025.3 815.9 L1036.3 814.9 L1045.5 813.9 L1052.5 812.9 L1056.8 811.9 L1058.2 810.9 M941.8 832.0 L943.2 832.0 L947.5 832.0 L954.5 832.0 L963.7 832.0 L974.7 831.9 L987.0 831.9 L1000.0 831.9 L1013.0 831.9 L1025.3 831.9 L1036.3 832.0 L1045.5 832.0 L1052.5 832.0 L1056.8 832.0 L1058.2 832.0" transform="translate(0 -3.9000000000000004)" fill="none" stroke="url(#gb3)" stroke-width="7.8" stroke-linejoin="round" stroke-linecap="round"/><path d="M941.8 592.0 L943.2 590.9 L947.5 589.8 L954.5 588.7 L963.7 587.6 L974.7 586.5 L987.0 585.5 L1000.0 584.4 L1013.0 583.4 L1025.3 582.3 L1036.3 581.3 L1045.5 580.3 L1052.5 579.4 L1056.8 578.4 L1058.2 577.4 M941.8 621.2 L943.2 620.1 L947.5 619.0 L954.5 617.9 L963.7 616.8 L974.7 615.7 L987.0 614.6 L1000.0 613.6 L1013.0 612.6 L1025.3 611.5 L1036.3 610.5 L1045.5 609.5 L1052.5 608.5 L1056.8 607.6 L1058.2 606.6 M941.8 650.4 L943.2 649.3 L947.5 648.2 L954.5 647.1 L963.7 646.0 L974.7 644.9 L987.0 643.8 L1000.0 642.8 L1013.0 641.7 L1025.3 640.7 L1036.3 639.7 L1045.5 638.7 L1052.5 637.7 L1056.8 636.8 L1058.2 635.8 M941.8 679.6 L943.2 678.5 L947.5 677.4 L954.5 676.3 L963.7 675.2 L974.7 674.1 L987.0 673.0 L1000.0 672.0 L1013.0 670.9 L1025.3 669.9 L1036.3 668.9 L1045.5 667.9 L1052.5 666.9 L1056.8 666.0 L1058.2 665.0 M941.8 708.8 L943.2 707.7 L947.5 706.5 L954.5 705.4 L963.7 704.4 L974.7 703.3 L987.0 702.2 L1000.0 701.2 L1013.0 700.1 L1025.3 699.1 L1036.3 698.1 L1045.5 697.1 L1052.5 696.1 L1056.8 695.1 L1058.2 694.2 M941.8 738.0 L943.2 736.8 L947.5 735.7 L954.5 734.6 L963.7 733.5 L974.7 732.5 L987.0 731.4 L1000.0 730.4 L1013.0 729.3 L1025.3 728.3 L1036.3 727.3 L1045.5 726.3 L1052.5 725.3 L1056.8 724.3 L1058.2 723.4 M941.8 767.1 L943.2 766.0 L947.5 764.9 L954.5 763.8 L963.7 762.7 L974.7 761.7 L987.0 760.6 L1000.0 759.5 L1013.0 758.5 L1025.3 757.5 L1036.3 756.5 L1045.5 755.5 L1052.5 754.5 L1056.8 753.5 L1058.2 752.5 M941.8 796.3 L943.2 795.2 L947.5 794.1 L954.5 793.0 L963.7 791.9 L974.7 790.8 L987.0 789.8 L1000.0 788.7 L1013.0 787.7 L1025.3 786.7 L1036.3 785.7 L1045.5 784.7 L1052.5 783.7 L1056.8 782.7 L1058.2 781.7 M941.8 825.5 L943.2 824.4 L947.5 823.3 L954.5 822.2 L963.7 821.1 L974.7 820.0 L987.0 819.0 L1000.0 817.9 L1013.0 816.9 L1025.3 815.9 L1036.3 814.9 L1045.5 813.9 L1052.5 812.9 L1056.8 811.9 L1058.2 810.9 M941.8 832.0 L943.2 832.0 L947.5 832.0 L954.5 832.0 L963.7 832.0 L974.7 831.9 L987.0 831.9 L1000.0 831.9 L1013.0 831.9 L1025.3 831.9 L1036.3 832.0 L1045.5 832.0 L1052.5 832.0 L1056.8 832.0 L1058.2 832.0" transform="translate(0 -4.875)" fill="none" stroke="url(#gb4)" stroke-width="3.9" stroke-linejoin="round" stroke-linecap="round"/></g><path d="M731 444.6H806V458.1H744.5C734 458.1 731 454.1 731 448.6Z" fill="url(#tg)"/><path d="M731 444.6H806V458.1H744.5C734 458.1 731 454.1 731 448.6Z" fill="url(#th)"/><path d="M932 563.6H1007V577.1H945.5C935 577.1 932 573.1 932 567.6Z" fill="url(#tg)"/><path d="M932 563.6H1007V577.1H945.5C935 577.1 932 573.1 932 567.6Z" fill="url(#th)"/></svg><!-- /SPRING -->
</div>
<div id="scroll"><svg class="abs" style="left:3px;top:5px" width="9" height="5" viewBox="0 0 9 5"><path d="M0 5L4.5 0L9 5Z" fill="#8c8c8c"/></svg><div class="abs" style="left:3px;top:17px;width:9px;height:141px;border-radius:4.5px;background:#8c8c8c"></div></div>
<div id="cal">
  <div class="abs nw" style="left:22px;top:18px;font-size:50px;line-height:54px;color:#fff;transform:scaleX(0.82);transform-origin:0 0;-webkit-text-stroke:1.8px #333">13:50:50</div>
  <div class="abs nw" style="left:24px;top:74px;font-size:14px;color:#99c7f2">23 января 2026 г.</div>
  <div class="abs" style="left:0;top:111px;width:360px;height:1px;background:#5a5a5a"></div>
  <div class="abs nw" style="left:24px;top:130px;font-size:14.5px;color:#dcdcdc">Январь 2026</div>
  <svg class="abs" style="left:267px;top:133px" width="18" height="10" viewBox="0 0 18 10"><path d="M1 9L9 1L17 9" fill="none" stroke="#d8d8d8" stroke-width="1.2"/></svg>
  <svg class="abs" style="left:315px;top:133px" width="18" height="10" viewBox="0 0 18 10"><path d="M1 1L9 9L17 1" fill="none" stroke="#d8d8d8" stroke-width="1.2"/></svg>
  <div class="calrow" style="top:168px;font-size:12.5px;color:#f2f2f2"><span>Пн</span><span>Вт</span><span>Ср</span><span>Чт</span><span>Пт</span><span>Сб</span><span>Вс</span></div>
  <div class="calrow" style="top:206px"><span class="g">29</span><span class="g">30</span><span class="g">31</span><span>1</span><span>2</span><span>3</span><span>4</span></div>
  <div class="calrow" style="top:248px"><span>5</span><span>6</span><span>7</span><span>8</span><span>9</span><span>10</span><span>11</span></div>
  <div class="calrow" style="top:290px"><span>12</span><span>13</span><span>14</span><span>15</span><span>16</span><span>17</span><span>18</span></div>
  <div class="abs" style="left:205px;top:323px;width:46px;height:40px;background:#0078d7"></div>
  <div class="abs" style="left:207px;top:325px;width:42px;height:36px;border:2px solid #000"></div>
  <div class="calrow" style="top:332px"><span>19</span><span>20</span><span>21</span><span>22</span><span style="font-weight:bold">23</span><span>24</span><span>25</span></div>
  <div class="calrow" style="top:374px"><span>26</span><span>27</span><span>28</span><span>29</span><span>30</span><span>31</span><span class="g">1</span></div>
  <div class="calrow" style="top:416px"><span class="g">2</span><span class="g">3</span><span class="g">4</span><span class="g">5</span><span class="g">6</span><span class="g">7</span><span class="g">8</span></div>
  <div class="abs" style="left:277px;top:445px;width:20px;height:1px;background:#3e3e3e"></div>
  <div class="abs" style="left:302px;top:445px;width:43px;height:1px;background:#3e3e3e"></div>
  <div class="abs nw" style="left:24px;top:465px;font-size:13.8px;color:#99c7f2">Параметры даты и времени</div>
</div>
<div id="taskbar">
  <svg class="abs" style="left:16px;top:12px" width="17" height="16" viewBox="0 0 17 16"><path d="M0 2.3L7 1.3V7.5H0Z M8 1.1L17 0V7.5H8Z M0 8.5H7V14.7L0 13.7Z M8 8.5H17V16L8 14.9Z" fill="#fff"/></svg>
  <svg class="abs" style="left:62px;top:7px" width="26" height="26" viewBox="0 0 26 26"><defs><linearGradient id="yb" x1="0" y1="0" x2="1" y2="1"><stop offset="0" stop-color="#ff3d2e"/><stop offset="0.6" stop-color="#ff6a2a"/><stop offset="1" stop-color="#ffb800"/></linearGradient></defs><circle cx="13" cy="13" r="12.3" fill="#fff"/><path d="M8 6.5L13 14V20.5M18 6.5L13 14" fill="none" stroke="url(#yb)" stroke-width="2.8" stroke-linecap="round"/><path d="M18 6.5L14.2 12.2" stroke="#c94cf0" stroke-width="2.8" stroke-linecap="round"/></svg>
  <div class="abs" style="left:55px;top:38px;width:31px;height:2px;background:#76b9ed"></div>
  <div class="abs" style="left:86px;top:38px;width:9px;height:2px;background:#5a8fbd"></div>
  <svg class="abs" style="left:1266px;top:15px" width="14" height="9" viewBox="0 0 14 9"><path d="M1 8L7 2L13 8" fill="none" stroke="#fff" stroke-width="1.3"/></svg>
  <svg class="abs" style="left:1288px;top:12px" width="17" height="17" viewBox="0 0 17 17"><circle cx="8.5" cy="8.5" r="8" fill="#3eaa35"/><path d="M2 6 A7 7 0 0 1 12 2 L8.5 8.5Z M15 11 A7 7 0 0 1 5 15 L8.5 8.5Z" fill="#f2e23a"/><circle cx="8.5" cy="8.5" r="5.8" fill="#f4e43c"/><path d="M8.5 4.8V12.2M4.8 8.5H12.2" stroke="#3e9c2e" stroke-width="2.2"/></svg>
  <svg class="abs" style="left:1312px;top:13px" width="18" height="15" viewBox="0 0 18 15"><path d="M4.5 1.5H16.5V10H4.5Z M1 1.5H5V8H1Z M10.5 10V13M6.5 13.5H14" fill="none" stroke="#fff" stroke-width="1.1"/></svg>
  <div class="abs nw" style="left:1340px;top:13px;font-size:11.5px;color:#fff;transform:scaleX(0.92);transform-origin:0 0">РУС</div>
  <div class="abs" style="left:1369px;top:0;width:67px;height:40px;background:#393f33"></div>
  <div class="abs" style="left:1436px;top:0;width:1px;height:40px;background:#5a6052"></div>
  <div class="abs nw" style="left:1369px;top:3px;width:67px;text-align:center;font-size:12px;line-height:17px;color:#fff;transform:scaleX(0.92)">13:50<br>23.01.2026</div>
</div>

</body></html>
